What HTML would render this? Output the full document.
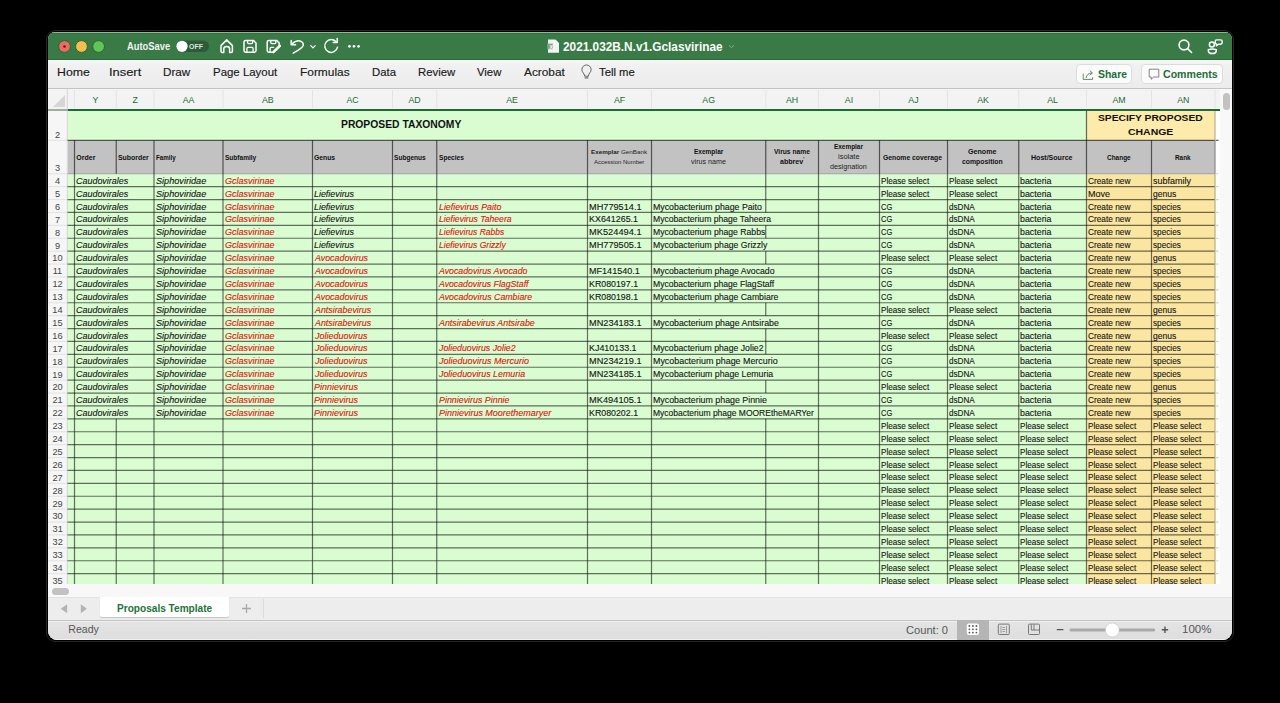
<!DOCTYPE html><html><head><meta charset="utf-8"><style>
html,body{margin:0;padding:0;width:1280px;height:703px;overflow:hidden;background:#000;}
body{position:relative;font-family:"Liberation Sans",sans-serif;}
.t{position:absolute;white-space:nowrap;line-height:0;}
.t>span{display:inline-block;vertical-align:baseline;}
svg{position:absolute;left:0;top:0;}
</style></head><body>
<div style="position:absolute;left:46px;top:30px;width:1186px;height:610px;border-radius:9px;border:1px solid #262626;background:#000;"></div>
<div id="win" style="position:absolute;left:48px;top:32px;width:1184px;height:608px;border-radius:7px 7px 9px 9px;overflow:hidden;background:#f0f0f0;">
<div style="position:absolute;left:-48px;top:-32px;width:1280px;height:703px;">
<div style="position:absolute;left:48.00px;top:32.00px;width:1184.00px;height:27.70px;background:#3a7a47;"></div>
<div style="position:absolute;left:48.00px;top:58.70px;width:1184.00px;height:1.00px;background:#2b6c38;"></div>
<div style="position:absolute;left:48.00px;top:32.00px;width:1184.00px;height:1.00px;background:#8fb897;"></div>
<div style="position:absolute;left:48.00px;top:33.00px;width:1184.00px;height:1.00px;background:#2f7238;"></div>
<div style="position:absolute;left:48.00px;top:59.70px;width:1184.00px;height:28.80px;background:linear-gradient(#f7f7f7,#f1f1f1 20%,#ececec);"></div>
<div style="position:absolute;left:48.00px;top:88.00px;width:1184.00px;height:1.20px;background:#c4c4c4;"></div>
<div style="position:absolute;left:48.00px;top:89.20px;width:1184.00px;height:19.60px;background:#f3f3f3;"></div>
<div style="position:absolute;left:67.50px;top:110.60px;width:1152.10px;height:473.80px;background:#ffffff;"></div>
<div style="position:absolute;left:48.00px;top:110.60px;width:19.50px;height:473.80px;background:#f6f6f6;"></div>
<div style="position:absolute;left:67.50px;top:110.60px;width:1019.00px;height:29.70px;background:#d9fcd1;"></div>
<div style="position:absolute;left:1086.50px;top:110.60px;width:128.50px;height:29.70px;background:#fcebab;"></div>
<div style="position:absolute;left:67.50px;top:140.30px;width:1147.50px;height:33.45px;background:#c2c2c2;"></div>
<div style="position:absolute;left:67.50px;top:173.75px;width:1019.00px;height:410.65px;background:#d9fcd1;"></div>
<div style="position:absolute;left:1086.50px;top:173.75px;width:128.50px;height:410.65px;background:#fbe6a1;"></div>
<div style="position:absolute;left:48.00px;top:109.40px;width:19.50px;height:1.20px;background:#9fae9f;z-index:2;"></div>
<div style="position:absolute;left:67.50px;top:108.80px;width:1152.10px;height:1.90px;background:#1e6b37;z-index:2;"></div>
<svg width="1280" height="703" style="z-index:1"><line x1="48" y1="140.3" x2="67.5" y2="140.3" stroke="#e2e2e2" stroke-width="1"/><line x1="48" y1="173.75" x2="67.5" y2="173.75" stroke="#e2e2e2" stroke-width="1"/><line x1="48" y1="186.65" x2="67.5" y2="186.65" stroke="#e2e2e2" stroke-width="1"/><line x1="48" y1="199.55" x2="67.5" y2="199.55" stroke="#e2e2e2" stroke-width="1"/><line x1="48" y1="212.45" x2="67.5" y2="212.45" stroke="#e2e2e2" stroke-width="1"/><line x1="48" y1="225.35" x2="67.5" y2="225.35" stroke="#e2e2e2" stroke-width="1"/><line x1="48" y1="238.25" x2="67.5" y2="238.25" stroke="#e2e2e2" stroke-width="1"/><line x1="48" y1="251.15" x2="67.5" y2="251.15" stroke="#e2e2e2" stroke-width="1"/><line x1="48" y1="264.05" x2="67.5" y2="264.05" stroke="#e2e2e2" stroke-width="1"/><line x1="48" y1="276.95" x2="67.5" y2="276.95" stroke="#e2e2e2" stroke-width="1"/><line x1="48" y1="289.85" x2="67.5" y2="289.85" stroke="#e2e2e2" stroke-width="1"/><line x1="48" y1="302.75" x2="67.5" y2="302.75" stroke="#e2e2e2" stroke-width="1"/><line x1="48" y1="315.65" x2="67.5" y2="315.65" stroke="#e2e2e2" stroke-width="1"/><line x1="48" y1="328.55" x2="67.5" y2="328.55" stroke="#e2e2e2" stroke-width="1"/><line x1="48" y1="341.45000000000005" x2="67.5" y2="341.45000000000005" stroke="#e2e2e2" stroke-width="1"/><line x1="48" y1="354.35" x2="67.5" y2="354.35" stroke="#e2e2e2" stroke-width="1"/><line x1="48" y1="367.25" x2="67.5" y2="367.25" stroke="#e2e2e2" stroke-width="1"/><line x1="48" y1="380.15" x2="67.5" y2="380.15" stroke="#e2e2e2" stroke-width="1"/><line x1="48" y1="393.05" x2="67.5" y2="393.05" stroke="#e2e2e2" stroke-width="1"/><line x1="48" y1="405.95000000000005" x2="67.5" y2="405.95000000000005" stroke="#e2e2e2" stroke-width="1"/><line x1="48" y1="418.85" x2="67.5" y2="418.85" stroke="#e2e2e2" stroke-width="1"/><line x1="48" y1="431.75" x2="67.5" y2="431.75" stroke="#e2e2e2" stroke-width="1"/><line x1="48" y1="444.65000000000003" x2="67.5" y2="444.65000000000003" stroke="#e2e2e2" stroke-width="1"/><line x1="48" y1="457.55" x2="67.5" y2="457.55" stroke="#e2e2e2" stroke-width="1"/><line x1="48" y1="470.45" x2="67.5" y2="470.45" stroke="#e2e2e2" stroke-width="1"/><line x1="48" y1="483.35" x2="67.5" y2="483.35" stroke="#e2e2e2" stroke-width="1"/><line x1="48" y1="496.25" x2="67.5" y2="496.25" stroke="#e2e2e2" stroke-width="1"/><line x1="48" y1="509.15000000000003" x2="67.5" y2="509.15000000000003" stroke="#e2e2e2" stroke-width="1"/><line x1="48" y1="522.05" x2="67.5" y2="522.05" stroke="#e2e2e2" stroke-width="1"/><line x1="48" y1="534.95" x2="67.5" y2="534.95" stroke="#e2e2e2" stroke-width="1"/><line x1="48" y1="547.85" x2="67.5" y2="547.85" stroke="#e2e2e2" stroke-width="1"/><line x1="48" y1="560.75" x2="67.5" y2="560.75" stroke="#e2e2e2" stroke-width="1"/><line x1="48" y1="573.6500000000001" x2="67.5" y2="573.6500000000001" stroke="#e2e2e2" stroke-width="1"/><line x1="67.3" y1="89" x2="67.3" y2="584.4" stroke="#d4d4d4" stroke-width="1"/><line x1="74.5" y1="90" x2="74.5" y2="108" stroke="#e4e4e4" stroke-width="1"/><line x1="116.25" y1="90" x2="116.25" y2="108" stroke="#e4e4e4" stroke-width="1"/><line x1="154" y1="90" x2="154" y2="108" stroke="#e4e4e4" stroke-width="1"/><line x1="223" y1="90" x2="223" y2="108" stroke="#e4e4e4" stroke-width="1"/><line x1="312.5" y1="90" x2="312.5" y2="108" stroke="#e4e4e4" stroke-width="1"/><line x1="392.5" y1="90" x2="392.5" y2="108" stroke="#e4e4e4" stroke-width="1"/><line x1="436.75" y1="90" x2="436.75" y2="108" stroke="#e4e4e4" stroke-width="1"/><line x1="587.5" y1="90" x2="587.5" y2="108" stroke="#e4e4e4" stroke-width="1"/><line x1="651.5" y1="90" x2="651.5" y2="108" stroke="#e4e4e4" stroke-width="1"/><line x1="765.75" y1="90" x2="765.75" y2="108" stroke="#e4e4e4" stroke-width="1"/><line x1="818.5" y1="90" x2="818.5" y2="108" stroke="#e4e4e4" stroke-width="1"/><line x1="879.5" y1="90" x2="879.5" y2="108" stroke="#e4e4e4" stroke-width="1"/><line x1="947.5" y1="90" x2="947.5" y2="108" stroke="#e4e4e4" stroke-width="1"/><line x1="1018.75" y1="90" x2="1018.75" y2="108" stroke="#e4e4e4" stroke-width="1"/><line x1="1086.5" y1="90" x2="1086.5" y2="108" stroke="#e4e4e4" stroke-width="1"/><line x1="1151.5" y1="90" x2="1151.5" y2="108" stroke="#e4e4e4" stroke-width="1"/><line x1="1215" y1="90" x2="1215" y2="108" stroke="#e4e4e4" stroke-width="1"/><line x1="67.5" y1="140.3" x2="1215" y2="140.3" stroke="rgba(0,0,0,0.58)" stroke-width="1.2"/><line x1="1215.5" y1="140.3" x2="1218.6" y2="140.3" stroke="#6a6a6a" stroke-width="1.2"/><line x1="67.5" y1="173.75" x2="1215" y2="173.75" stroke="#a9a4aa" stroke-width="1.2"/><line x1="1215.5" y1="173.75" x2="1218.6" y2="173.75" stroke="#cfcfcf" stroke-width="1.2"/><line x1="67.5" y1="186.65" x2="1215" y2="186.65" stroke="rgba(0,0,0,0.56)" stroke-width="1.2"/><line x1="1215.5" y1="186.65" x2="1218.6" y2="186.65" stroke="#cfcfcf" stroke-width="1.2"/><line x1="67.5" y1="199.55" x2="1215" y2="199.55" stroke="rgba(0,0,0,0.56)" stroke-width="1.2"/><line x1="1215.5" y1="199.55" x2="1218.6" y2="199.55" stroke="#cfcfcf" stroke-width="1.2"/><line x1="67.5" y1="212.45" x2="1215" y2="212.45" stroke="rgba(0,0,0,0.56)" stroke-width="1.2"/><line x1="1215.5" y1="212.45" x2="1218.6" y2="212.45" stroke="#cfcfcf" stroke-width="1.2"/><line x1="67.5" y1="225.35" x2="1215" y2="225.35" stroke="rgba(0,0,0,0.56)" stroke-width="1.2"/><line x1="1215.5" y1="225.35" x2="1218.6" y2="225.35" stroke="#cfcfcf" stroke-width="1.2"/><line x1="67.5" y1="238.25" x2="1215" y2="238.25" stroke="rgba(0,0,0,0.56)" stroke-width="1.2"/><line x1="1215.5" y1="238.25" x2="1218.6" y2="238.25" stroke="#cfcfcf" stroke-width="1.2"/><line x1="67.5" y1="251.15" x2="1215" y2="251.15" stroke="rgba(0,0,0,0.56)" stroke-width="1.2"/><line x1="1215.5" y1="251.15" x2="1218.6" y2="251.15" stroke="#cfcfcf" stroke-width="1.2"/><line x1="67.5" y1="264.05" x2="1215" y2="264.05" stroke="rgba(0,0,0,0.56)" stroke-width="1.2"/><line x1="1215.5" y1="264.05" x2="1218.6" y2="264.05" stroke="#cfcfcf" stroke-width="1.2"/><line x1="67.5" y1="276.95" x2="1215" y2="276.95" stroke="rgba(0,0,0,0.56)" stroke-width="1.2"/><line x1="1215.5" y1="276.95" x2="1218.6" y2="276.95" stroke="#cfcfcf" stroke-width="1.2"/><line x1="67.5" y1="289.85" x2="1215" y2="289.85" stroke="rgba(0,0,0,0.56)" stroke-width="1.2"/><line x1="1215.5" y1="289.85" x2="1218.6" y2="289.85" stroke="#cfcfcf" stroke-width="1.2"/><line x1="67.5" y1="302.75" x2="1215" y2="302.75" stroke="rgba(0,0,0,0.56)" stroke-width="1.2"/><line x1="1215.5" y1="302.75" x2="1218.6" y2="302.75" stroke="#cfcfcf" stroke-width="1.2"/><line x1="67.5" y1="315.65" x2="1215" y2="315.65" stroke="rgba(0,0,0,0.56)" stroke-width="1.2"/><line x1="1215.5" y1="315.65" x2="1218.6" y2="315.65" stroke="#cfcfcf" stroke-width="1.2"/><line x1="67.5" y1="328.55" x2="1215" y2="328.55" stroke="rgba(0,0,0,0.56)" stroke-width="1.2"/><line x1="1215.5" y1="328.55" x2="1218.6" y2="328.55" stroke="#cfcfcf" stroke-width="1.2"/><line x1="67.5" y1="341.45000000000005" x2="1215" y2="341.45000000000005" stroke="rgba(0,0,0,0.56)" stroke-width="1.2"/><line x1="1215.5" y1="341.45000000000005" x2="1218.6" y2="341.45000000000005" stroke="#cfcfcf" stroke-width="1.2"/><line x1="67.5" y1="354.35" x2="1215" y2="354.35" stroke="rgba(0,0,0,0.56)" stroke-width="1.2"/><line x1="1215.5" y1="354.35" x2="1218.6" y2="354.35" stroke="#cfcfcf" stroke-width="1.2"/><line x1="67.5" y1="367.25" x2="1215" y2="367.25" stroke="rgba(0,0,0,0.56)" stroke-width="1.2"/><line x1="1215.5" y1="367.25" x2="1218.6" y2="367.25" stroke="#cfcfcf" stroke-width="1.2"/><line x1="67.5" y1="380.15" x2="1215" y2="380.15" stroke="rgba(0,0,0,0.56)" stroke-width="1.2"/><line x1="1215.5" y1="380.15" x2="1218.6" y2="380.15" stroke="#cfcfcf" stroke-width="1.2"/><line x1="67.5" y1="393.05" x2="1215" y2="393.05" stroke="rgba(0,0,0,0.56)" stroke-width="1.2"/><line x1="1215.5" y1="393.05" x2="1218.6" y2="393.05" stroke="#cfcfcf" stroke-width="1.2"/><line x1="67.5" y1="405.95000000000005" x2="1215" y2="405.95000000000005" stroke="rgba(0,0,0,0.56)" stroke-width="1.2"/><line x1="1215.5" y1="405.95000000000005" x2="1218.6" y2="405.95000000000005" stroke="#cfcfcf" stroke-width="1.2"/><line x1="67.5" y1="418.85" x2="1215" y2="418.85" stroke="rgba(0,0,0,0.56)" stroke-width="1.2"/><line x1="1215.5" y1="418.85" x2="1218.6" y2="418.85" stroke="#cfcfcf" stroke-width="1.2"/><line x1="67.5" y1="431.75" x2="1215" y2="431.75" stroke="rgba(0,0,0,0.56)" stroke-width="1.2"/><line x1="1215.5" y1="431.75" x2="1218.6" y2="431.75" stroke="#cfcfcf" stroke-width="1.2"/><line x1="67.5" y1="444.65000000000003" x2="1215" y2="444.65000000000003" stroke="rgba(0,0,0,0.56)" stroke-width="1.2"/><line x1="1215.5" y1="444.65000000000003" x2="1218.6" y2="444.65000000000003" stroke="#cfcfcf" stroke-width="1.2"/><line x1="67.5" y1="457.55" x2="1215" y2="457.55" stroke="rgba(0,0,0,0.56)" stroke-width="1.2"/><line x1="1215.5" y1="457.55" x2="1218.6" y2="457.55" stroke="#cfcfcf" stroke-width="1.2"/><line x1="67.5" y1="470.45" x2="1215" y2="470.45" stroke="rgba(0,0,0,0.56)" stroke-width="1.2"/><line x1="1215.5" y1="470.45" x2="1218.6" y2="470.45" stroke="#cfcfcf" stroke-width="1.2"/><line x1="67.5" y1="483.35" x2="1215" y2="483.35" stroke="rgba(0,0,0,0.56)" stroke-width="1.2"/><line x1="1215.5" y1="483.35" x2="1218.6" y2="483.35" stroke="#cfcfcf" stroke-width="1.2"/><line x1="67.5" y1="496.25" x2="1215" y2="496.25" stroke="rgba(0,0,0,0.56)" stroke-width="1.2"/><line x1="1215.5" y1="496.25" x2="1218.6" y2="496.25" stroke="#cfcfcf" stroke-width="1.2"/><line x1="67.5" y1="509.15000000000003" x2="1215" y2="509.15000000000003" stroke="rgba(0,0,0,0.56)" stroke-width="1.2"/><line x1="1215.5" y1="509.15000000000003" x2="1218.6" y2="509.15000000000003" stroke="#cfcfcf" stroke-width="1.2"/><line x1="67.5" y1="522.05" x2="1215" y2="522.05" stroke="rgba(0,0,0,0.56)" stroke-width="1.2"/><line x1="1215.5" y1="522.05" x2="1218.6" y2="522.05" stroke="#cfcfcf" stroke-width="1.2"/><line x1="67.5" y1="534.95" x2="1215" y2="534.95" stroke="rgba(0,0,0,0.56)" stroke-width="1.2"/><line x1="1215.5" y1="534.95" x2="1218.6" y2="534.95" stroke="#cfcfcf" stroke-width="1.2"/><line x1="67.5" y1="547.85" x2="1215" y2="547.85" stroke="rgba(0,0,0,0.56)" stroke-width="1.2"/><line x1="1215.5" y1="547.85" x2="1218.6" y2="547.85" stroke="#cfcfcf" stroke-width="1.2"/><line x1="67.5" y1="560.75" x2="1215" y2="560.75" stroke="rgba(0,0,0,0.56)" stroke-width="1.2"/><line x1="1215.5" y1="560.75" x2="1218.6" y2="560.75" stroke="#cfcfcf" stroke-width="1.2"/><line x1="67.5" y1="573.6500000000001" x2="1215" y2="573.6500000000001" stroke="rgba(0,0,0,0.56)" stroke-width="1.2"/><line x1="1215.5" y1="573.6500000000001" x2="1218.6" y2="573.6500000000001" stroke="#cfcfcf" stroke-width="1.2"/><line x1="1086.5" y1="110.6" x2="1086.5" y2="140.3" stroke="rgba(0,0,0,0.58)" stroke-width="1.2"/><line x1="1215" y1="110.6" x2="1215" y2="140.3" stroke="#bdb38c" stroke-width="1.2"/><line x1="74.5" y1="140.3" x2="74.5" y2="173.75" stroke="rgba(0,0,0,0.58)" stroke-width="1.2"/><line x1="116.25" y1="140.3" x2="116.25" y2="173.75" stroke="rgba(0,0,0,0.58)" stroke-width="1.2"/><line x1="154" y1="140.3" x2="154" y2="173.75" stroke="rgba(0,0,0,0.58)" stroke-width="1.2"/><line x1="223" y1="140.3" x2="223" y2="173.75" stroke="rgba(0,0,0,0.58)" stroke-width="1.2"/><line x1="312.5" y1="140.3" x2="312.5" y2="173.75" stroke="rgba(0,0,0,0.58)" stroke-width="1.2"/><line x1="392.5" y1="140.3" x2="392.5" y2="173.75" stroke="rgba(0,0,0,0.58)" stroke-width="1.2"/><line x1="436.75" y1="140.3" x2="436.75" y2="173.75" stroke="rgba(0,0,0,0.58)" stroke-width="1.2"/><line x1="587.5" y1="140.3" x2="587.5" y2="173.75" stroke="rgba(0,0,0,0.58)" stroke-width="1.2"/><line x1="651.5" y1="140.3" x2="651.5" y2="173.75" stroke="rgba(0,0,0,0.58)" stroke-width="1.2"/><line x1="765.75" y1="140.3" x2="765.75" y2="173.75" stroke="rgba(0,0,0,0.58)" stroke-width="1.2"/><line x1="818.5" y1="140.3" x2="818.5" y2="173.75" stroke="rgba(0,0,0,0.58)" stroke-width="1.2"/><line x1="879.5" y1="140.3" x2="879.5" y2="173.75" stroke="rgba(0,0,0,0.58)" stroke-width="1.2"/><line x1="947.5" y1="140.3" x2="947.5" y2="173.75" stroke="rgba(0,0,0,0.58)" stroke-width="1.2"/><line x1="1018.75" y1="140.3" x2="1018.75" y2="173.75" stroke="rgba(0,0,0,0.58)" stroke-width="1.2"/><line x1="1086.5" y1="140.3" x2="1086.5" y2="173.75" stroke="rgba(0,0,0,0.58)" stroke-width="1.2"/><line x1="1151.5" y1="140.3" x2="1151.5" y2="173.75" stroke="rgba(0,0,0,0.58)" stroke-width="1.2"/><line x1="1215" y1="140.3" x2="1215" y2="173.75" stroke="#8a8a8a" stroke-width="1.2"/><line x1="74.5" y1="173.75" x2="74.5" y2="186.65" stroke="rgba(0,0,0,0.56)" stroke-width="1.2"/><line x1="74.5" y1="186.65" x2="74.5" y2="199.55" stroke="rgba(0,0,0,0.56)" stroke-width="1.2"/><line x1="74.5" y1="199.55" x2="74.5" y2="212.45" stroke="rgba(0,0,0,0.56)" stroke-width="1.2"/><line x1="74.5" y1="212.45" x2="74.5" y2="225.35" stroke="rgba(0,0,0,0.56)" stroke-width="1.2"/><line x1="74.5" y1="225.35" x2="74.5" y2="238.25" stroke="rgba(0,0,0,0.56)" stroke-width="1.2"/><line x1="74.5" y1="238.25" x2="74.5" y2="251.15" stroke="rgba(0,0,0,0.56)" stroke-width="1.2"/><line x1="74.5" y1="251.15" x2="74.5" y2="264.05" stroke="rgba(0,0,0,0.56)" stroke-width="1.2"/><line x1="74.5" y1="264.05" x2="74.5" y2="276.95" stroke="rgba(0,0,0,0.56)" stroke-width="1.2"/><line x1="74.5" y1="276.95" x2="74.5" y2="289.85" stroke="rgba(0,0,0,0.56)" stroke-width="1.2"/><line x1="74.5" y1="289.85" x2="74.5" y2="302.75" stroke="rgba(0,0,0,0.56)" stroke-width="1.2"/><line x1="74.5" y1="302.75" x2="74.5" y2="315.65" stroke="rgba(0,0,0,0.56)" stroke-width="1.2"/><line x1="74.5" y1="315.65" x2="74.5" y2="328.55" stroke="rgba(0,0,0,0.56)" stroke-width="1.2"/><line x1="74.5" y1="328.55" x2="74.5" y2="341.45000000000005" stroke="rgba(0,0,0,0.56)" stroke-width="1.2"/><line x1="74.5" y1="341.45000000000005" x2="74.5" y2="354.35" stroke="rgba(0,0,0,0.56)" stroke-width="1.2"/><line x1="74.5" y1="354.35" x2="74.5" y2="367.25" stroke="rgba(0,0,0,0.56)" stroke-width="1.2"/><line x1="74.5" y1="367.25" x2="74.5" y2="380.15" stroke="rgba(0,0,0,0.56)" stroke-width="1.2"/><line x1="74.5" y1="380.15" x2="74.5" y2="393.05" stroke="rgba(0,0,0,0.56)" stroke-width="1.2"/><line x1="74.5" y1="393.05" x2="74.5" y2="405.95000000000005" stroke="rgba(0,0,0,0.56)" stroke-width="1.2"/><line x1="74.5" y1="405.95000000000005" x2="74.5" y2="418.85" stroke="rgba(0,0,0,0.56)" stroke-width="1.2"/><line x1="74.5" y1="418.85" x2="74.5" y2="431.75" stroke="rgba(0,0,0,0.56)" stroke-width="1.2"/><line x1="74.5" y1="431.75" x2="74.5" y2="444.65000000000003" stroke="rgba(0,0,0,0.56)" stroke-width="1.2"/><line x1="74.5" y1="444.65000000000003" x2="74.5" y2="457.55" stroke="rgba(0,0,0,0.56)" stroke-width="1.2"/><line x1="74.5" y1="457.55" x2="74.5" y2="470.45" stroke="rgba(0,0,0,0.56)" stroke-width="1.2"/><line x1="74.5" y1="470.45" x2="74.5" y2="483.35" stroke="rgba(0,0,0,0.56)" stroke-width="1.2"/><line x1="74.5" y1="483.35" x2="74.5" y2="496.25" stroke="rgba(0,0,0,0.56)" stroke-width="1.2"/><line x1="74.5" y1="496.25" x2="74.5" y2="509.15000000000003" stroke="rgba(0,0,0,0.56)" stroke-width="1.2"/><line x1="74.5" y1="509.15000000000003" x2="74.5" y2="522.05" stroke="rgba(0,0,0,0.56)" stroke-width="1.2"/><line x1="74.5" y1="522.05" x2="74.5" y2="534.95" stroke="rgba(0,0,0,0.56)" stroke-width="1.2"/><line x1="74.5" y1="534.95" x2="74.5" y2="547.85" stroke="rgba(0,0,0,0.56)" stroke-width="1.2"/><line x1="74.5" y1="547.85" x2="74.5" y2="560.75" stroke="rgba(0,0,0,0.56)" stroke-width="1.2"/><line x1="74.5" y1="560.75" x2="74.5" y2="573.6500000000001" stroke="rgba(0,0,0,0.56)" stroke-width="1.2"/><line x1="74.5" y1="573.6500000000001" x2="74.5" y2="584.4" stroke="rgba(0,0,0,0.56)" stroke-width="1.2"/><line x1="116.25" y1="418.85" x2="116.25" y2="431.75" stroke="rgba(0,0,0,0.56)" stroke-width="1.2"/><line x1="116.25" y1="431.75" x2="116.25" y2="444.65000000000003" stroke="rgba(0,0,0,0.56)" stroke-width="1.2"/><line x1="116.25" y1="444.65000000000003" x2="116.25" y2="457.55" stroke="rgba(0,0,0,0.56)" stroke-width="1.2"/><line x1="116.25" y1="457.55" x2="116.25" y2="470.45" stroke="rgba(0,0,0,0.56)" stroke-width="1.2"/><line x1="116.25" y1="470.45" x2="116.25" y2="483.35" stroke="rgba(0,0,0,0.56)" stroke-width="1.2"/><line x1="116.25" y1="483.35" x2="116.25" y2="496.25" stroke="rgba(0,0,0,0.56)" stroke-width="1.2"/><line x1="116.25" y1="496.25" x2="116.25" y2="509.15000000000003" stroke="rgba(0,0,0,0.56)" stroke-width="1.2"/><line x1="116.25" y1="509.15000000000003" x2="116.25" y2="522.05" stroke="rgba(0,0,0,0.56)" stroke-width="1.2"/><line x1="116.25" y1="522.05" x2="116.25" y2="534.95" stroke="rgba(0,0,0,0.56)" stroke-width="1.2"/><line x1="116.25" y1="534.95" x2="116.25" y2="547.85" stroke="rgba(0,0,0,0.56)" stroke-width="1.2"/><line x1="116.25" y1="547.85" x2="116.25" y2="560.75" stroke="rgba(0,0,0,0.56)" stroke-width="1.2"/><line x1="116.25" y1="560.75" x2="116.25" y2="573.6500000000001" stroke="rgba(0,0,0,0.56)" stroke-width="1.2"/><line x1="116.25" y1="573.6500000000001" x2="116.25" y2="584.4" stroke="rgba(0,0,0,0.56)" stroke-width="1.2"/><line x1="154" y1="173.75" x2="154" y2="186.65" stroke="rgba(0,0,0,0.56)" stroke-width="1.2"/><line x1="154" y1="186.65" x2="154" y2="199.55" stroke="rgba(0,0,0,0.56)" stroke-width="1.2"/><line x1="154" y1="199.55" x2="154" y2="212.45" stroke="rgba(0,0,0,0.56)" stroke-width="1.2"/><line x1="154" y1="212.45" x2="154" y2="225.35" stroke="rgba(0,0,0,0.56)" stroke-width="1.2"/><line x1="154" y1="225.35" x2="154" y2="238.25" stroke="rgba(0,0,0,0.56)" stroke-width="1.2"/><line x1="154" y1="238.25" x2="154" y2="251.15" stroke="rgba(0,0,0,0.56)" stroke-width="1.2"/><line x1="154" y1="251.15" x2="154" y2="264.05" stroke="rgba(0,0,0,0.56)" stroke-width="1.2"/><line x1="154" y1="264.05" x2="154" y2="276.95" stroke="rgba(0,0,0,0.56)" stroke-width="1.2"/><line x1="154" y1="276.95" x2="154" y2="289.85" stroke="rgba(0,0,0,0.56)" stroke-width="1.2"/><line x1="154" y1="289.85" x2="154" y2="302.75" stroke="rgba(0,0,0,0.56)" stroke-width="1.2"/><line x1="154" y1="302.75" x2="154" y2="315.65" stroke="rgba(0,0,0,0.56)" stroke-width="1.2"/><line x1="154" y1="315.65" x2="154" y2="328.55" stroke="rgba(0,0,0,0.56)" stroke-width="1.2"/><line x1="154" y1="328.55" x2="154" y2="341.45000000000005" stroke="rgba(0,0,0,0.56)" stroke-width="1.2"/><line x1="154" y1="341.45000000000005" x2="154" y2="354.35" stroke="rgba(0,0,0,0.56)" stroke-width="1.2"/><line x1="154" y1="354.35" x2="154" y2="367.25" stroke="rgba(0,0,0,0.56)" stroke-width="1.2"/><line x1="154" y1="367.25" x2="154" y2="380.15" stroke="rgba(0,0,0,0.56)" stroke-width="1.2"/><line x1="154" y1="380.15" x2="154" y2="393.05" stroke="rgba(0,0,0,0.56)" stroke-width="1.2"/><line x1="154" y1="393.05" x2="154" y2="405.95000000000005" stroke="rgba(0,0,0,0.56)" stroke-width="1.2"/><line x1="154" y1="405.95000000000005" x2="154" y2="418.85" stroke="rgba(0,0,0,0.56)" stroke-width="1.2"/><line x1="154" y1="418.85" x2="154" y2="431.75" stroke="rgba(0,0,0,0.56)" stroke-width="1.2"/><line x1="154" y1="431.75" x2="154" y2="444.65000000000003" stroke="rgba(0,0,0,0.56)" stroke-width="1.2"/><line x1="154" y1="444.65000000000003" x2="154" y2="457.55" stroke="rgba(0,0,0,0.56)" stroke-width="1.2"/><line x1="154" y1="457.55" x2="154" y2="470.45" stroke="rgba(0,0,0,0.56)" stroke-width="1.2"/><line x1="154" y1="470.45" x2="154" y2="483.35" stroke="rgba(0,0,0,0.56)" stroke-width="1.2"/><line x1="154" y1="483.35" x2="154" y2="496.25" stroke="rgba(0,0,0,0.56)" stroke-width="1.2"/><line x1="154" y1="496.25" x2="154" y2="509.15000000000003" stroke="rgba(0,0,0,0.56)" stroke-width="1.2"/><line x1="154" y1="509.15000000000003" x2="154" y2="522.05" stroke="rgba(0,0,0,0.56)" stroke-width="1.2"/><line x1="154" y1="522.05" x2="154" y2="534.95" stroke="rgba(0,0,0,0.56)" stroke-width="1.2"/><line x1="154" y1="534.95" x2="154" y2="547.85" stroke="rgba(0,0,0,0.56)" stroke-width="1.2"/><line x1="154" y1="547.85" x2="154" y2="560.75" stroke="rgba(0,0,0,0.56)" stroke-width="1.2"/><line x1="154" y1="560.75" x2="154" y2="573.6500000000001" stroke="rgba(0,0,0,0.56)" stroke-width="1.2"/><line x1="154" y1="573.6500000000001" x2="154" y2="584.4" stroke="rgba(0,0,0,0.56)" stroke-width="1.2"/><line x1="223" y1="173.75" x2="223" y2="186.65" stroke="rgba(0,0,0,0.56)" stroke-width="1.2"/><line x1="223" y1="186.65" x2="223" y2="199.55" stroke="rgba(0,0,0,0.56)" stroke-width="1.2"/><line x1="223" y1="199.55" x2="223" y2="212.45" stroke="rgba(0,0,0,0.56)" stroke-width="1.2"/><line x1="223" y1="212.45" x2="223" y2="225.35" stroke="rgba(0,0,0,0.56)" stroke-width="1.2"/><line x1="223" y1="225.35" x2="223" y2="238.25" stroke="rgba(0,0,0,0.56)" stroke-width="1.2"/><line x1="223" y1="238.25" x2="223" y2="251.15" stroke="rgba(0,0,0,0.56)" stroke-width="1.2"/><line x1="223" y1="251.15" x2="223" y2="264.05" stroke="rgba(0,0,0,0.56)" stroke-width="1.2"/><line x1="223" y1="264.05" x2="223" y2="276.95" stroke="rgba(0,0,0,0.56)" stroke-width="1.2"/><line x1="223" y1="276.95" x2="223" y2="289.85" stroke="rgba(0,0,0,0.56)" stroke-width="1.2"/><line x1="223" y1="289.85" x2="223" y2="302.75" stroke="rgba(0,0,0,0.56)" stroke-width="1.2"/><line x1="223" y1="302.75" x2="223" y2="315.65" stroke="rgba(0,0,0,0.56)" stroke-width="1.2"/><line x1="223" y1="315.65" x2="223" y2="328.55" stroke="rgba(0,0,0,0.56)" stroke-width="1.2"/><line x1="223" y1="328.55" x2="223" y2="341.45000000000005" stroke="rgba(0,0,0,0.56)" stroke-width="1.2"/><line x1="223" y1="341.45000000000005" x2="223" y2="354.35" stroke="rgba(0,0,0,0.56)" stroke-width="1.2"/><line x1="223" y1="354.35" x2="223" y2="367.25" stroke="rgba(0,0,0,0.56)" stroke-width="1.2"/><line x1="223" y1="367.25" x2="223" y2="380.15" stroke="rgba(0,0,0,0.56)" stroke-width="1.2"/><line x1="223" y1="380.15" x2="223" y2="393.05" stroke="rgba(0,0,0,0.56)" stroke-width="1.2"/><line x1="223" y1="393.05" x2="223" y2="405.95000000000005" stroke="rgba(0,0,0,0.56)" stroke-width="1.2"/><line x1="223" y1="405.95000000000005" x2="223" y2="418.85" stroke="rgba(0,0,0,0.56)" stroke-width="1.2"/><line x1="223" y1="418.85" x2="223" y2="431.75" stroke="rgba(0,0,0,0.56)" stroke-width="1.2"/><line x1="223" y1="431.75" x2="223" y2="444.65000000000003" stroke="rgba(0,0,0,0.56)" stroke-width="1.2"/><line x1="223" y1="444.65000000000003" x2="223" y2="457.55" stroke="rgba(0,0,0,0.56)" stroke-width="1.2"/><line x1="223" y1="457.55" x2="223" y2="470.45" stroke="rgba(0,0,0,0.56)" stroke-width="1.2"/><line x1="223" y1="470.45" x2="223" y2="483.35" stroke="rgba(0,0,0,0.56)" stroke-width="1.2"/><line x1="223" y1="483.35" x2="223" y2="496.25" stroke="rgba(0,0,0,0.56)" stroke-width="1.2"/><line x1="223" y1="496.25" x2="223" y2="509.15000000000003" stroke="rgba(0,0,0,0.56)" stroke-width="1.2"/><line x1="223" y1="509.15000000000003" x2="223" y2="522.05" stroke="rgba(0,0,0,0.56)" stroke-width="1.2"/><line x1="223" y1="522.05" x2="223" y2="534.95" stroke="rgba(0,0,0,0.56)" stroke-width="1.2"/><line x1="223" y1="534.95" x2="223" y2="547.85" stroke="rgba(0,0,0,0.56)" stroke-width="1.2"/><line x1="223" y1="547.85" x2="223" y2="560.75" stroke="rgba(0,0,0,0.56)" stroke-width="1.2"/><line x1="223" y1="560.75" x2="223" y2="573.6500000000001" stroke="rgba(0,0,0,0.56)" stroke-width="1.2"/><line x1="223" y1="573.6500000000001" x2="223" y2="584.4" stroke="rgba(0,0,0,0.56)" stroke-width="1.2"/><line x1="312.5" y1="173.75" x2="312.5" y2="186.65" stroke="rgba(0,0,0,0.56)" stroke-width="1.2"/><line x1="312.5" y1="186.65" x2="312.5" y2="199.55" stroke="rgba(0,0,0,0.56)" stroke-width="1.2"/><line x1="312.5" y1="199.55" x2="312.5" y2="212.45" stroke="rgba(0,0,0,0.56)" stroke-width="1.2"/><line x1="312.5" y1="212.45" x2="312.5" y2="225.35" stroke="rgba(0,0,0,0.56)" stroke-width="1.2"/><line x1="312.5" y1="225.35" x2="312.5" y2="238.25" stroke="rgba(0,0,0,0.56)" stroke-width="1.2"/><line x1="312.5" y1="238.25" x2="312.5" y2="251.15" stroke="rgba(0,0,0,0.56)" stroke-width="1.2"/><line x1="312.5" y1="251.15" x2="312.5" y2="264.05" stroke="rgba(0,0,0,0.56)" stroke-width="1.2"/><line x1="312.5" y1="264.05" x2="312.5" y2="276.95" stroke="rgba(0,0,0,0.56)" stroke-width="1.2"/><line x1="312.5" y1="276.95" x2="312.5" y2="289.85" stroke="rgba(0,0,0,0.56)" stroke-width="1.2"/><line x1="312.5" y1="289.85" x2="312.5" y2="302.75" stroke="rgba(0,0,0,0.56)" stroke-width="1.2"/><line x1="312.5" y1="302.75" x2="312.5" y2="315.65" stroke="rgba(0,0,0,0.56)" stroke-width="1.2"/><line x1="312.5" y1="315.65" x2="312.5" y2="328.55" stroke="rgba(0,0,0,0.56)" stroke-width="1.2"/><line x1="312.5" y1="328.55" x2="312.5" y2="341.45000000000005" stroke="rgba(0,0,0,0.56)" stroke-width="1.2"/><line x1="312.5" y1="341.45000000000005" x2="312.5" y2="354.35" stroke="rgba(0,0,0,0.56)" stroke-width="1.2"/><line x1="312.5" y1="354.35" x2="312.5" y2="367.25" stroke="rgba(0,0,0,0.56)" stroke-width="1.2"/><line x1="312.5" y1="367.25" x2="312.5" y2="380.15" stroke="rgba(0,0,0,0.56)" stroke-width="1.2"/><line x1="312.5" y1="380.15" x2="312.5" y2="393.05" stroke="rgba(0,0,0,0.56)" stroke-width="1.2"/><line x1="312.5" y1="393.05" x2="312.5" y2="405.95000000000005" stroke="rgba(0,0,0,0.56)" stroke-width="1.2"/><line x1="312.5" y1="405.95000000000005" x2="312.5" y2="418.85" stroke="rgba(0,0,0,0.56)" stroke-width="1.2"/><line x1="312.5" y1="418.85" x2="312.5" y2="431.75" stroke="rgba(0,0,0,0.56)" stroke-width="1.2"/><line x1="312.5" y1="431.75" x2="312.5" y2="444.65000000000003" stroke="rgba(0,0,0,0.56)" stroke-width="1.2"/><line x1="312.5" y1="444.65000000000003" x2="312.5" y2="457.55" stroke="rgba(0,0,0,0.56)" stroke-width="1.2"/><line x1="312.5" y1="457.55" x2="312.5" y2="470.45" stroke="rgba(0,0,0,0.56)" stroke-width="1.2"/><line x1="312.5" y1="470.45" x2="312.5" y2="483.35" stroke="rgba(0,0,0,0.56)" stroke-width="1.2"/><line x1="312.5" y1="483.35" x2="312.5" y2="496.25" stroke="rgba(0,0,0,0.56)" stroke-width="1.2"/><line x1="312.5" y1="496.25" x2="312.5" y2="509.15000000000003" stroke="rgba(0,0,0,0.56)" stroke-width="1.2"/><line x1="312.5" y1="509.15000000000003" x2="312.5" y2="522.05" stroke="rgba(0,0,0,0.56)" stroke-width="1.2"/><line x1="312.5" y1="522.05" x2="312.5" y2="534.95" stroke="rgba(0,0,0,0.56)" stroke-width="1.2"/><line x1="312.5" y1="534.95" x2="312.5" y2="547.85" stroke="rgba(0,0,0,0.56)" stroke-width="1.2"/><line x1="312.5" y1="547.85" x2="312.5" y2="560.75" stroke="rgba(0,0,0,0.56)" stroke-width="1.2"/><line x1="312.5" y1="560.75" x2="312.5" y2="573.6500000000001" stroke="rgba(0,0,0,0.56)" stroke-width="1.2"/><line x1="312.5" y1="573.6500000000001" x2="312.5" y2="584.4" stroke="rgba(0,0,0,0.56)" stroke-width="1.2"/><line x1="392.5" y1="173.75" x2="392.5" y2="186.65" stroke="rgba(0,0,0,0.56)" stroke-width="1.2"/><line x1="392.5" y1="186.65" x2="392.5" y2="199.55" stroke="rgba(0,0,0,0.56)" stroke-width="1.2"/><line x1="392.5" y1="199.55" x2="392.5" y2="212.45" stroke="rgba(0,0,0,0.56)" stroke-width="1.2"/><line x1="392.5" y1="212.45" x2="392.5" y2="225.35" stroke="rgba(0,0,0,0.56)" stroke-width="1.2"/><line x1="392.5" y1="225.35" x2="392.5" y2="238.25" stroke="rgba(0,0,0,0.56)" stroke-width="1.2"/><line x1="392.5" y1="238.25" x2="392.5" y2="251.15" stroke="rgba(0,0,0,0.56)" stroke-width="1.2"/><line x1="392.5" y1="251.15" x2="392.5" y2="264.05" stroke="rgba(0,0,0,0.56)" stroke-width="1.2"/><line x1="392.5" y1="264.05" x2="392.5" y2="276.95" stroke="rgba(0,0,0,0.56)" stroke-width="1.2"/><line x1="392.5" y1="276.95" x2="392.5" y2="289.85" stroke="rgba(0,0,0,0.56)" stroke-width="1.2"/><line x1="392.5" y1="289.85" x2="392.5" y2="302.75" stroke="rgba(0,0,0,0.56)" stroke-width="1.2"/><line x1="392.5" y1="302.75" x2="392.5" y2="315.65" stroke="rgba(0,0,0,0.56)" stroke-width="1.2"/><line x1="392.5" y1="315.65" x2="392.5" y2="328.55" stroke="rgba(0,0,0,0.56)" stroke-width="1.2"/><line x1="392.5" y1="328.55" x2="392.5" y2="341.45000000000005" stroke="rgba(0,0,0,0.56)" stroke-width="1.2"/><line x1="392.5" y1="341.45000000000005" x2="392.5" y2="354.35" stroke="rgba(0,0,0,0.56)" stroke-width="1.2"/><line x1="392.5" y1="354.35" x2="392.5" y2="367.25" stroke="rgba(0,0,0,0.56)" stroke-width="1.2"/><line x1="392.5" y1="367.25" x2="392.5" y2="380.15" stroke="rgba(0,0,0,0.56)" stroke-width="1.2"/><line x1="392.5" y1="380.15" x2="392.5" y2="393.05" stroke="rgba(0,0,0,0.56)" stroke-width="1.2"/><line x1="392.5" y1="393.05" x2="392.5" y2="405.95000000000005" stroke="rgba(0,0,0,0.56)" stroke-width="1.2"/><line x1="392.5" y1="405.95000000000005" x2="392.5" y2="418.85" stroke="rgba(0,0,0,0.56)" stroke-width="1.2"/><line x1="392.5" y1="418.85" x2="392.5" y2="431.75" stroke="rgba(0,0,0,0.56)" stroke-width="1.2"/><line x1="392.5" y1="431.75" x2="392.5" y2="444.65000000000003" stroke="rgba(0,0,0,0.56)" stroke-width="1.2"/><line x1="392.5" y1="444.65000000000003" x2="392.5" y2="457.55" stroke="rgba(0,0,0,0.56)" stroke-width="1.2"/><line x1="392.5" y1="457.55" x2="392.5" y2="470.45" stroke="rgba(0,0,0,0.56)" stroke-width="1.2"/><line x1="392.5" y1="470.45" x2="392.5" y2="483.35" stroke="rgba(0,0,0,0.56)" stroke-width="1.2"/><line x1="392.5" y1="483.35" x2="392.5" y2="496.25" stroke="rgba(0,0,0,0.56)" stroke-width="1.2"/><line x1="392.5" y1="496.25" x2="392.5" y2="509.15000000000003" stroke="rgba(0,0,0,0.56)" stroke-width="1.2"/><line x1="392.5" y1="509.15000000000003" x2="392.5" y2="522.05" stroke="rgba(0,0,0,0.56)" stroke-width="1.2"/><line x1="392.5" y1="522.05" x2="392.5" y2="534.95" stroke="rgba(0,0,0,0.56)" stroke-width="1.2"/><line x1="392.5" y1="534.95" x2="392.5" y2="547.85" stroke="rgba(0,0,0,0.56)" stroke-width="1.2"/><line x1="392.5" y1="547.85" x2="392.5" y2="560.75" stroke="rgba(0,0,0,0.56)" stroke-width="1.2"/><line x1="392.5" y1="560.75" x2="392.5" y2="573.6500000000001" stroke="rgba(0,0,0,0.56)" stroke-width="1.2"/><line x1="392.5" y1="573.6500000000001" x2="392.5" y2="584.4" stroke="rgba(0,0,0,0.56)" stroke-width="1.2"/><line x1="436.75" y1="173.75" x2="436.75" y2="186.65" stroke="rgba(0,0,0,0.56)" stroke-width="1.2"/><line x1="436.75" y1="186.65" x2="436.75" y2="199.55" stroke="rgba(0,0,0,0.56)" stroke-width="1.2"/><line x1="436.75" y1="199.55" x2="436.75" y2="212.45" stroke="rgba(0,0,0,0.56)" stroke-width="1.2"/><line x1="436.75" y1="212.45" x2="436.75" y2="225.35" stroke="rgba(0,0,0,0.56)" stroke-width="1.2"/><line x1="436.75" y1="225.35" x2="436.75" y2="238.25" stroke="rgba(0,0,0,0.56)" stroke-width="1.2"/><line x1="436.75" y1="238.25" x2="436.75" y2="251.15" stroke="rgba(0,0,0,0.56)" stroke-width="1.2"/><line x1="436.75" y1="251.15" x2="436.75" y2="264.05" stroke="rgba(0,0,0,0.56)" stroke-width="1.2"/><line x1="436.75" y1="264.05" x2="436.75" y2="276.95" stroke="rgba(0,0,0,0.56)" stroke-width="1.2"/><line x1="436.75" y1="276.95" x2="436.75" y2="289.85" stroke="rgba(0,0,0,0.56)" stroke-width="1.2"/><line x1="436.75" y1="289.85" x2="436.75" y2="302.75" stroke="rgba(0,0,0,0.56)" stroke-width="1.2"/><line x1="436.75" y1="302.75" x2="436.75" y2="315.65" stroke="rgba(0,0,0,0.56)" stroke-width="1.2"/><line x1="436.75" y1="315.65" x2="436.75" y2="328.55" stroke="rgba(0,0,0,0.56)" stroke-width="1.2"/><line x1="436.75" y1="328.55" x2="436.75" y2="341.45000000000005" stroke="rgba(0,0,0,0.56)" stroke-width="1.2"/><line x1="436.75" y1="341.45000000000005" x2="436.75" y2="354.35" stroke="rgba(0,0,0,0.56)" stroke-width="1.2"/><line x1="436.75" y1="354.35" x2="436.75" y2="367.25" stroke="rgba(0,0,0,0.56)" stroke-width="1.2"/><line x1="436.75" y1="367.25" x2="436.75" y2="380.15" stroke="rgba(0,0,0,0.56)" stroke-width="1.2"/><line x1="436.75" y1="380.15" x2="436.75" y2="393.05" stroke="rgba(0,0,0,0.56)" stroke-width="1.2"/><line x1="436.75" y1="393.05" x2="436.75" y2="405.95000000000005" stroke="rgba(0,0,0,0.56)" stroke-width="1.2"/><line x1="436.75" y1="405.95000000000005" x2="436.75" y2="418.85" stroke="rgba(0,0,0,0.56)" stroke-width="1.2"/><line x1="436.75" y1="418.85" x2="436.75" y2="431.75" stroke="rgba(0,0,0,0.56)" stroke-width="1.2"/><line x1="436.75" y1="431.75" x2="436.75" y2="444.65000000000003" stroke="rgba(0,0,0,0.56)" stroke-width="1.2"/><line x1="436.75" y1="444.65000000000003" x2="436.75" y2="457.55" stroke="rgba(0,0,0,0.56)" stroke-width="1.2"/><line x1="436.75" y1="457.55" x2="436.75" y2="470.45" stroke="rgba(0,0,0,0.56)" stroke-width="1.2"/><line x1="436.75" y1="470.45" x2="436.75" y2="483.35" stroke="rgba(0,0,0,0.56)" stroke-width="1.2"/><line x1="436.75" y1="483.35" x2="436.75" y2="496.25" stroke="rgba(0,0,0,0.56)" stroke-width="1.2"/><line x1="436.75" y1="496.25" x2="436.75" y2="509.15000000000003" stroke="rgba(0,0,0,0.56)" stroke-width="1.2"/><line x1="436.75" y1="509.15000000000003" x2="436.75" y2="522.05" stroke="rgba(0,0,0,0.56)" stroke-width="1.2"/><line x1="436.75" y1="522.05" x2="436.75" y2="534.95" stroke="rgba(0,0,0,0.56)" stroke-width="1.2"/><line x1="436.75" y1="534.95" x2="436.75" y2="547.85" stroke="rgba(0,0,0,0.56)" stroke-width="1.2"/><line x1="436.75" y1="547.85" x2="436.75" y2="560.75" stroke="rgba(0,0,0,0.56)" stroke-width="1.2"/><line x1="436.75" y1="560.75" x2="436.75" y2="573.6500000000001" stroke="rgba(0,0,0,0.56)" stroke-width="1.2"/><line x1="436.75" y1="573.6500000000001" x2="436.75" y2="584.4" stroke="rgba(0,0,0,0.56)" stroke-width="1.2"/><line x1="587.5" y1="173.75" x2="587.5" y2="186.65" stroke="rgba(0,0,0,0.56)" stroke-width="1.2"/><line x1="587.5" y1="186.65" x2="587.5" y2="199.55" stroke="rgba(0,0,0,0.56)" stroke-width="1.2"/><line x1="587.5" y1="199.55" x2="587.5" y2="212.45" stroke="rgba(0,0,0,0.56)" stroke-width="1.2"/><line x1="587.5" y1="212.45" x2="587.5" y2="225.35" stroke="rgba(0,0,0,0.56)" stroke-width="1.2"/><line x1="587.5" y1="225.35" x2="587.5" y2="238.25" stroke="rgba(0,0,0,0.56)" stroke-width="1.2"/><line x1="587.5" y1="238.25" x2="587.5" y2="251.15" stroke="rgba(0,0,0,0.56)" stroke-width="1.2"/><line x1="587.5" y1="251.15" x2="587.5" y2="264.05" stroke="rgba(0,0,0,0.56)" stroke-width="1.2"/><line x1="587.5" y1="264.05" x2="587.5" y2="276.95" stroke="rgba(0,0,0,0.56)" stroke-width="1.2"/><line x1="587.5" y1="276.95" x2="587.5" y2="289.85" stroke="rgba(0,0,0,0.56)" stroke-width="1.2"/><line x1="587.5" y1="289.85" x2="587.5" y2="302.75" stroke="rgba(0,0,0,0.56)" stroke-width="1.2"/><line x1="587.5" y1="302.75" x2="587.5" y2="315.65" stroke="rgba(0,0,0,0.56)" stroke-width="1.2"/><line x1="587.5" y1="315.65" x2="587.5" y2="328.55" stroke="rgba(0,0,0,0.56)" stroke-width="1.2"/><line x1="587.5" y1="328.55" x2="587.5" y2="341.45000000000005" stroke="rgba(0,0,0,0.56)" stroke-width="1.2"/><line x1="587.5" y1="341.45000000000005" x2="587.5" y2="354.35" stroke="rgba(0,0,0,0.56)" stroke-width="1.2"/><line x1="587.5" y1="354.35" x2="587.5" y2="367.25" stroke="rgba(0,0,0,0.56)" stroke-width="1.2"/><line x1="587.5" y1="367.25" x2="587.5" y2="380.15" stroke="rgba(0,0,0,0.56)" stroke-width="1.2"/><line x1="587.5" y1="380.15" x2="587.5" y2="393.05" stroke="rgba(0,0,0,0.56)" stroke-width="1.2"/><line x1="587.5" y1="393.05" x2="587.5" y2="405.95000000000005" stroke="rgba(0,0,0,0.56)" stroke-width="1.2"/><line x1="587.5" y1="405.95000000000005" x2="587.5" y2="418.85" stroke="rgba(0,0,0,0.56)" stroke-width="1.2"/><line x1="587.5" y1="418.85" x2="587.5" y2="431.75" stroke="rgba(0,0,0,0.56)" stroke-width="1.2"/><line x1="587.5" y1="431.75" x2="587.5" y2="444.65000000000003" stroke="rgba(0,0,0,0.56)" stroke-width="1.2"/><line x1="587.5" y1="444.65000000000003" x2="587.5" y2="457.55" stroke="rgba(0,0,0,0.56)" stroke-width="1.2"/><line x1="587.5" y1="457.55" x2="587.5" y2="470.45" stroke="rgba(0,0,0,0.56)" stroke-width="1.2"/><line x1="587.5" y1="470.45" x2="587.5" y2="483.35" stroke="rgba(0,0,0,0.56)" stroke-width="1.2"/><line x1="587.5" y1="483.35" x2="587.5" y2="496.25" stroke="rgba(0,0,0,0.56)" stroke-width="1.2"/><line x1="587.5" y1="496.25" x2="587.5" y2="509.15000000000003" stroke="rgba(0,0,0,0.56)" stroke-width="1.2"/><line x1="587.5" y1="509.15000000000003" x2="587.5" y2="522.05" stroke="rgba(0,0,0,0.56)" stroke-width="1.2"/><line x1="587.5" y1="522.05" x2="587.5" y2="534.95" stroke="rgba(0,0,0,0.56)" stroke-width="1.2"/><line x1="587.5" y1="534.95" x2="587.5" y2="547.85" stroke="rgba(0,0,0,0.56)" stroke-width="1.2"/><line x1="587.5" y1="547.85" x2="587.5" y2="560.75" stroke="rgba(0,0,0,0.56)" stroke-width="1.2"/><line x1="587.5" y1="560.75" x2="587.5" y2="573.6500000000001" stroke="rgba(0,0,0,0.56)" stroke-width="1.2"/><line x1="587.5" y1="573.6500000000001" x2="587.5" y2="584.4" stroke="rgba(0,0,0,0.56)" stroke-width="1.2"/><line x1="651.5" y1="173.75" x2="651.5" y2="186.65" stroke="rgba(0,0,0,0.56)" stroke-width="1.2"/><line x1="651.5" y1="186.65" x2="651.5" y2="199.55" stroke="rgba(0,0,0,0.56)" stroke-width="1.2"/><line x1="651.5" y1="199.55" x2="651.5" y2="212.45" stroke="rgba(0,0,0,0.56)" stroke-width="1.2"/><line x1="651.5" y1="212.45" x2="651.5" y2="225.35" stroke="rgba(0,0,0,0.56)" stroke-width="1.2"/><line x1="651.5" y1="225.35" x2="651.5" y2="238.25" stroke="rgba(0,0,0,0.56)" stroke-width="1.2"/><line x1="651.5" y1="238.25" x2="651.5" y2="251.15" stroke="rgba(0,0,0,0.56)" stroke-width="1.2"/><line x1="651.5" y1="251.15" x2="651.5" y2="264.05" stroke="rgba(0,0,0,0.56)" stroke-width="1.2"/><line x1="651.5" y1="264.05" x2="651.5" y2="276.95" stroke="rgba(0,0,0,0.56)" stroke-width="1.2"/><line x1="651.5" y1="276.95" x2="651.5" y2="289.85" stroke="rgba(0,0,0,0.56)" stroke-width="1.2"/><line x1="651.5" y1="289.85" x2="651.5" y2="302.75" stroke="rgba(0,0,0,0.56)" stroke-width="1.2"/><line x1="651.5" y1="302.75" x2="651.5" y2="315.65" stroke="rgba(0,0,0,0.56)" stroke-width="1.2"/><line x1="651.5" y1="315.65" x2="651.5" y2="328.55" stroke="rgba(0,0,0,0.56)" stroke-width="1.2"/><line x1="651.5" y1="328.55" x2="651.5" y2="341.45000000000005" stroke="rgba(0,0,0,0.56)" stroke-width="1.2"/><line x1="651.5" y1="341.45000000000005" x2="651.5" y2="354.35" stroke="rgba(0,0,0,0.56)" stroke-width="1.2"/><line x1="651.5" y1="354.35" x2="651.5" y2="367.25" stroke="rgba(0,0,0,0.56)" stroke-width="1.2"/><line x1="651.5" y1="367.25" x2="651.5" y2="380.15" stroke="rgba(0,0,0,0.56)" stroke-width="1.2"/><line x1="651.5" y1="380.15" x2="651.5" y2="393.05" stroke="rgba(0,0,0,0.56)" stroke-width="1.2"/><line x1="651.5" y1="393.05" x2="651.5" y2="405.95000000000005" stroke="rgba(0,0,0,0.56)" stroke-width="1.2"/><line x1="651.5" y1="405.95000000000005" x2="651.5" y2="418.85" stroke="rgba(0,0,0,0.56)" stroke-width="1.2"/><line x1="651.5" y1="418.85" x2="651.5" y2="431.75" stroke="rgba(0,0,0,0.56)" stroke-width="1.2"/><line x1="651.5" y1="431.75" x2="651.5" y2="444.65000000000003" stroke="rgba(0,0,0,0.56)" stroke-width="1.2"/><line x1="651.5" y1="444.65000000000003" x2="651.5" y2="457.55" stroke="rgba(0,0,0,0.56)" stroke-width="1.2"/><line x1="651.5" y1="457.55" x2="651.5" y2="470.45" stroke="rgba(0,0,0,0.56)" stroke-width="1.2"/><line x1="651.5" y1="470.45" x2="651.5" y2="483.35" stroke="rgba(0,0,0,0.56)" stroke-width="1.2"/><line x1="651.5" y1="483.35" x2="651.5" y2="496.25" stroke="rgba(0,0,0,0.56)" stroke-width="1.2"/><line x1="651.5" y1="496.25" x2="651.5" y2="509.15000000000003" stroke="rgba(0,0,0,0.56)" stroke-width="1.2"/><line x1="651.5" y1="509.15000000000003" x2="651.5" y2="522.05" stroke="rgba(0,0,0,0.56)" stroke-width="1.2"/><line x1="651.5" y1="522.05" x2="651.5" y2="534.95" stroke="rgba(0,0,0,0.56)" stroke-width="1.2"/><line x1="651.5" y1="534.95" x2="651.5" y2="547.85" stroke="rgba(0,0,0,0.56)" stroke-width="1.2"/><line x1="651.5" y1="547.85" x2="651.5" y2="560.75" stroke="rgba(0,0,0,0.56)" stroke-width="1.2"/><line x1="651.5" y1="560.75" x2="651.5" y2="573.6500000000001" stroke="rgba(0,0,0,0.56)" stroke-width="1.2"/><line x1="651.5" y1="573.6500000000001" x2="651.5" y2="584.4" stroke="rgba(0,0,0,0.56)" stroke-width="1.2"/><line x1="765.75" y1="173.75" x2="765.75" y2="186.65" stroke="rgba(0,0,0,0.56)" stroke-width="1.2"/><line x1="765.75" y1="186.65" x2="765.75" y2="199.55" stroke="rgba(0,0,0,0.56)" stroke-width="1.2"/><line x1="765.75" y1="199.55" x2="765.75" y2="212.45" stroke="rgba(0,0,0,0.56)" stroke-width="1.2"/><line x1="765.75" y1="225.35" x2="765.75" y2="238.25" stroke="rgba(0,0,0,0.56)" stroke-width="1.2"/><line x1="765.75" y1="251.15" x2="765.75" y2="264.05" stroke="rgba(0,0,0,0.56)" stroke-width="1.2"/><line x1="765.75" y1="302.75" x2="765.75" y2="315.65" stroke="rgba(0,0,0,0.56)" stroke-width="1.2"/><line x1="765.75" y1="328.55" x2="765.75" y2="341.45000000000005" stroke="rgba(0,0,0,0.56)" stroke-width="1.2"/><line x1="765.75" y1="341.45000000000005" x2="765.75" y2="354.35" stroke="rgba(0,0,0,0.56)" stroke-width="1.2"/><line x1="765.75" y1="380.15" x2="765.75" y2="393.05" stroke="rgba(0,0,0,0.56)" stroke-width="1.2"/><line x1="765.75" y1="418.85" x2="765.75" y2="431.75" stroke="rgba(0,0,0,0.56)" stroke-width="1.2"/><line x1="765.75" y1="431.75" x2="765.75" y2="444.65000000000003" stroke="rgba(0,0,0,0.56)" stroke-width="1.2"/><line x1="765.75" y1="444.65000000000003" x2="765.75" y2="457.55" stroke="rgba(0,0,0,0.56)" stroke-width="1.2"/><line x1="765.75" y1="457.55" x2="765.75" y2="470.45" stroke="rgba(0,0,0,0.56)" stroke-width="1.2"/><line x1="765.75" y1="470.45" x2="765.75" y2="483.35" stroke="rgba(0,0,0,0.56)" stroke-width="1.2"/><line x1="765.75" y1="483.35" x2="765.75" y2="496.25" stroke="rgba(0,0,0,0.56)" stroke-width="1.2"/><line x1="765.75" y1="496.25" x2="765.75" y2="509.15000000000003" stroke="rgba(0,0,0,0.56)" stroke-width="1.2"/><line x1="765.75" y1="509.15000000000003" x2="765.75" y2="522.05" stroke="rgba(0,0,0,0.56)" stroke-width="1.2"/><line x1="765.75" y1="522.05" x2="765.75" y2="534.95" stroke="rgba(0,0,0,0.56)" stroke-width="1.2"/><line x1="765.75" y1="534.95" x2="765.75" y2="547.85" stroke="rgba(0,0,0,0.56)" stroke-width="1.2"/><line x1="765.75" y1="547.85" x2="765.75" y2="560.75" stroke="rgba(0,0,0,0.56)" stroke-width="1.2"/><line x1="765.75" y1="560.75" x2="765.75" y2="573.6500000000001" stroke="rgba(0,0,0,0.56)" stroke-width="1.2"/><line x1="765.75" y1="573.6500000000001" x2="765.75" y2="584.4" stroke="rgba(0,0,0,0.56)" stroke-width="1.2"/><line x1="818.5" y1="173.75" x2="818.5" y2="186.65" stroke="rgba(0,0,0,0.56)" stroke-width="1.2"/><line x1="818.5" y1="186.65" x2="818.5" y2="199.55" stroke="rgba(0,0,0,0.56)" stroke-width="1.2"/><line x1="818.5" y1="199.55" x2="818.5" y2="212.45" stroke="rgba(0,0,0,0.56)" stroke-width="1.2"/><line x1="818.5" y1="212.45" x2="818.5" y2="225.35" stroke="rgba(0,0,0,0.56)" stroke-width="1.2"/><line x1="818.5" y1="225.35" x2="818.5" y2="238.25" stroke="rgba(0,0,0,0.56)" stroke-width="1.2"/><line x1="818.5" y1="238.25" x2="818.5" y2="251.15" stroke="rgba(0,0,0,0.56)" stroke-width="1.2"/><line x1="818.5" y1="251.15" x2="818.5" y2="264.05" stroke="rgba(0,0,0,0.56)" stroke-width="1.2"/><line x1="818.5" y1="264.05" x2="818.5" y2="276.95" stroke="rgba(0,0,0,0.56)" stroke-width="1.2"/><line x1="818.5" y1="276.95" x2="818.5" y2="289.85" stroke="rgba(0,0,0,0.56)" stroke-width="1.2"/><line x1="818.5" y1="289.85" x2="818.5" y2="302.75" stroke="rgba(0,0,0,0.56)" stroke-width="1.2"/><line x1="818.5" y1="302.75" x2="818.5" y2="315.65" stroke="rgba(0,0,0,0.56)" stroke-width="1.2"/><line x1="818.5" y1="315.65" x2="818.5" y2="328.55" stroke="rgba(0,0,0,0.56)" stroke-width="1.2"/><line x1="818.5" y1="328.55" x2="818.5" y2="341.45000000000005" stroke="rgba(0,0,0,0.56)" stroke-width="1.2"/><line x1="818.5" y1="341.45000000000005" x2="818.5" y2="354.35" stroke="rgba(0,0,0,0.56)" stroke-width="1.2"/><line x1="818.5" y1="354.35" x2="818.5" y2="367.25" stroke="rgba(0,0,0,0.56)" stroke-width="1.2"/><line x1="818.5" y1="367.25" x2="818.5" y2="380.15" stroke="rgba(0,0,0,0.56)" stroke-width="1.2"/><line x1="818.5" y1="380.15" x2="818.5" y2="393.05" stroke="rgba(0,0,0,0.56)" stroke-width="1.2"/><line x1="818.5" y1="393.05" x2="818.5" y2="405.95000000000005" stroke="rgba(0,0,0,0.56)" stroke-width="1.2"/><line x1="818.5" y1="405.95000000000005" x2="818.5" y2="418.85" stroke="rgba(0,0,0,0.56)" stroke-width="1.2"/><line x1="818.5" y1="418.85" x2="818.5" y2="431.75" stroke="rgba(0,0,0,0.56)" stroke-width="1.2"/><line x1="818.5" y1="431.75" x2="818.5" y2="444.65000000000003" stroke="rgba(0,0,0,0.56)" stroke-width="1.2"/><line x1="818.5" y1="444.65000000000003" x2="818.5" y2="457.55" stroke="rgba(0,0,0,0.56)" stroke-width="1.2"/><line x1="818.5" y1="457.55" x2="818.5" y2="470.45" stroke="rgba(0,0,0,0.56)" stroke-width="1.2"/><line x1="818.5" y1="470.45" x2="818.5" y2="483.35" stroke="rgba(0,0,0,0.56)" stroke-width="1.2"/><line x1="818.5" y1="483.35" x2="818.5" y2="496.25" stroke="rgba(0,0,0,0.56)" stroke-width="1.2"/><line x1="818.5" y1="496.25" x2="818.5" y2="509.15000000000003" stroke="rgba(0,0,0,0.56)" stroke-width="1.2"/><line x1="818.5" y1="509.15000000000003" x2="818.5" y2="522.05" stroke="rgba(0,0,0,0.56)" stroke-width="1.2"/><line x1="818.5" y1="522.05" x2="818.5" y2="534.95" stroke="rgba(0,0,0,0.56)" stroke-width="1.2"/><line x1="818.5" y1="534.95" x2="818.5" y2="547.85" stroke="rgba(0,0,0,0.56)" stroke-width="1.2"/><line x1="818.5" y1="547.85" x2="818.5" y2="560.75" stroke="rgba(0,0,0,0.56)" stroke-width="1.2"/><line x1="818.5" y1="560.75" x2="818.5" y2="573.6500000000001" stroke="rgba(0,0,0,0.56)" stroke-width="1.2"/><line x1="818.5" y1="573.6500000000001" x2="818.5" y2="584.4" stroke="rgba(0,0,0,0.56)" stroke-width="1.2"/><line x1="879.5" y1="173.75" x2="879.5" y2="186.65" stroke="rgba(0,0,0,0.56)" stroke-width="1.2"/><line x1="879.5" y1="186.65" x2="879.5" y2="199.55" stroke="rgba(0,0,0,0.56)" stroke-width="1.2"/><line x1="879.5" y1="199.55" x2="879.5" y2="212.45" stroke="rgba(0,0,0,0.56)" stroke-width="1.2"/><line x1="879.5" y1="212.45" x2="879.5" y2="225.35" stroke="rgba(0,0,0,0.56)" stroke-width="1.2"/><line x1="879.5" y1="225.35" x2="879.5" y2="238.25" stroke="rgba(0,0,0,0.56)" stroke-width="1.2"/><line x1="879.5" y1="238.25" x2="879.5" y2="251.15" stroke="rgba(0,0,0,0.56)" stroke-width="1.2"/><line x1="879.5" y1="251.15" x2="879.5" y2="264.05" stroke="rgba(0,0,0,0.56)" stroke-width="1.2"/><line x1="879.5" y1="264.05" x2="879.5" y2="276.95" stroke="rgba(0,0,0,0.56)" stroke-width="1.2"/><line x1="879.5" y1="276.95" x2="879.5" y2="289.85" stroke="rgba(0,0,0,0.56)" stroke-width="1.2"/><line x1="879.5" y1="289.85" x2="879.5" y2="302.75" stroke="rgba(0,0,0,0.56)" stroke-width="1.2"/><line x1="879.5" y1="302.75" x2="879.5" y2="315.65" stroke="rgba(0,0,0,0.56)" stroke-width="1.2"/><line x1="879.5" y1="315.65" x2="879.5" y2="328.55" stroke="rgba(0,0,0,0.56)" stroke-width="1.2"/><line x1="879.5" y1="328.55" x2="879.5" y2="341.45000000000005" stroke="rgba(0,0,0,0.56)" stroke-width="1.2"/><line x1="879.5" y1="341.45000000000005" x2="879.5" y2="354.35" stroke="rgba(0,0,0,0.56)" stroke-width="1.2"/><line x1="879.5" y1="354.35" x2="879.5" y2="367.25" stroke="rgba(0,0,0,0.56)" stroke-width="1.2"/><line x1="879.5" y1="367.25" x2="879.5" y2="380.15" stroke="rgba(0,0,0,0.56)" stroke-width="1.2"/><line x1="879.5" y1="380.15" x2="879.5" y2="393.05" stroke="rgba(0,0,0,0.56)" stroke-width="1.2"/><line x1="879.5" y1="393.05" x2="879.5" y2="405.95000000000005" stroke="rgba(0,0,0,0.56)" stroke-width="1.2"/><line x1="879.5" y1="405.95000000000005" x2="879.5" y2="418.85" stroke="rgba(0,0,0,0.56)" stroke-width="1.2"/><line x1="879.5" y1="418.85" x2="879.5" y2="431.75" stroke="rgba(0,0,0,0.56)" stroke-width="1.2"/><line x1="879.5" y1="431.75" x2="879.5" y2="444.65000000000003" stroke="rgba(0,0,0,0.56)" stroke-width="1.2"/><line x1="879.5" y1="444.65000000000003" x2="879.5" y2="457.55" stroke="rgba(0,0,0,0.56)" stroke-width="1.2"/><line x1="879.5" y1="457.55" x2="879.5" y2="470.45" stroke="rgba(0,0,0,0.56)" stroke-width="1.2"/><line x1="879.5" y1="470.45" x2="879.5" y2="483.35" stroke="rgba(0,0,0,0.56)" stroke-width="1.2"/><line x1="879.5" y1="483.35" x2="879.5" y2="496.25" stroke="rgba(0,0,0,0.56)" stroke-width="1.2"/><line x1="879.5" y1="496.25" x2="879.5" y2="509.15000000000003" stroke="rgba(0,0,0,0.56)" stroke-width="1.2"/><line x1="879.5" y1="509.15000000000003" x2="879.5" y2="522.05" stroke="rgba(0,0,0,0.56)" stroke-width="1.2"/><line x1="879.5" y1="522.05" x2="879.5" y2="534.95" stroke="rgba(0,0,0,0.56)" stroke-width="1.2"/><line x1="879.5" y1="534.95" x2="879.5" y2="547.85" stroke="rgba(0,0,0,0.56)" stroke-width="1.2"/><line x1="879.5" y1="547.85" x2="879.5" y2="560.75" stroke="rgba(0,0,0,0.56)" stroke-width="1.2"/><line x1="879.5" y1="560.75" x2="879.5" y2="573.6500000000001" stroke="rgba(0,0,0,0.56)" stroke-width="1.2"/><line x1="879.5" y1="573.6500000000001" x2="879.5" y2="584.4" stroke="rgba(0,0,0,0.56)" stroke-width="1.2"/><line x1="947.5" y1="173.75" x2="947.5" y2="186.65" stroke="rgba(0,0,0,0.56)" stroke-width="1.2"/><line x1="947.5" y1="186.65" x2="947.5" y2="199.55" stroke="rgba(0,0,0,0.56)" stroke-width="1.2"/><line x1="947.5" y1="199.55" x2="947.5" y2="212.45" stroke="rgba(0,0,0,0.56)" stroke-width="1.2"/><line x1="947.5" y1="212.45" x2="947.5" y2="225.35" stroke="rgba(0,0,0,0.56)" stroke-width="1.2"/><line x1="947.5" y1="225.35" x2="947.5" y2="238.25" stroke="rgba(0,0,0,0.56)" stroke-width="1.2"/><line x1="947.5" y1="238.25" x2="947.5" y2="251.15" stroke="rgba(0,0,0,0.56)" stroke-width="1.2"/><line x1="947.5" y1="251.15" x2="947.5" y2="264.05" stroke="rgba(0,0,0,0.56)" stroke-width="1.2"/><line x1="947.5" y1="264.05" x2="947.5" y2="276.95" stroke="rgba(0,0,0,0.56)" stroke-width="1.2"/><line x1="947.5" y1="276.95" x2="947.5" y2="289.85" stroke="rgba(0,0,0,0.56)" stroke-width="1.2"/><line x1="947.5" y1="289.85" x2="947.5" y2="302.75" stroke="rgba(0,0,0,0.56)" stroke-width="1.2"/><line x1="947.5" y1="302.75" x2="947.5" y2="315.65" stroke="rgba(0,0,0,0.56)" stroke-width="1.2"/><line x1="947.5" y1="315.65" x2="947.5" y2="328.55" stroke="rgba(0,0,0,0.56)" stroke-width="1.2"/><line x1="947.5" y1="328.55" x2="947.5" y2="341.45000000000005" stroke="rgba(0,0,0,0.56)" stroke-width="1.2"/><line x1="947.5" y1="341.45000000000005" x2="947.5" y2="354.35" stroke="rgba(0,0,0,0.56)" stroke-width="1.2"/><line x1="947.5" y1="354.35" x2="947.5" y2="367.25" stroke="rgba(0,0,0,0.56)" stroke-width="1.2"/><line x1="947.5" y1="367.25" x2="947.5" y2="380.15" stroke="rgba(0,0,0,0.56)" stroke-width="1.2"/><line x1="947.5" y1="380.15" x2="947.5" y2="393.05" stroke="rgba(0,0,0,0.56)" stroke-width="1.2"/><line x1="947.5" y1="393.05" x2="947.5" y2="405.95000000000005" stroke="rgba(0,0,0,0.56)" stroke-width="1.2"/><line x1="947.5" y1="405.95000000000005" x2="947.5" y2="418.85" stroke="rgba(0,0,0,0.56)" stroke-width="1.2"/><line x1="947.5" y1="418.85" x2="947.5" y2="431.75" stroke="rgba(0,0,0,0.56)" stroke-width="1.2"/><line x1="947.5" y1="431.75" x2="947.5" y2="444.65000000000003" stroke="rgba(0,0,0,0.56)" stroke-width="1.2"/><line x1="947.5" y1="444.65000000000003" x2="947.5" y2="457.55" stroke="rgba(0,0,0,0.56)" stroke-width="1.2"/><line x1="947.5" y1="457.55" x2="947.5" y2="470.45" stroke="rgba(0,0,0,0.56)" stroke-width="1.2"/><line x1="947.5" y1="470.45" x2="947.5" y2="483.35" stroke="rgba(0,0,0,0.56)" stroke-width="1.2"/><line x1="947.5" y1="483.35" x2="947.5" y2="496.25" stroke="rgba(0,0,0,0.56)" stroke-width="1.2"/><line x1="947.5" y1="496.25" x2="947.5" y2="509.15000000000003" stroke="rgba(0,0,0,0.56)" stroke-width="1.2"/><line x1="947.5" y1="509.15000000000003" x2="947.5" y2="522.05" stroke="rgba(0,0,0,0.56)" stroke-width="1.2"/><line x1="947.5" y1="522.05" x2="947.5" y2="534.95" stroke="rgba(0,0,0,0.56)" stroke-width="1.2"/><line x1="947.5" y1="534.95" x2="947.5" y2="547.85" stroke="rgba(0,0,0,0.56)" stroke-width="1.2"/><line x1="947.5" y1="547.85" x2="947.5" y2="560.75" stroke="rgba(0,0,0,0.56)" stroke-width="1.2"/><line x1="947.5" y1="560.75" x2="947.5" y2="573.6500000000001" stroke="rgba(0,0,0,0.56)" stroke-width="1.2"/><line x1="947.5" y1="573.6500000000001" x2="947.5" y2="584.4" stroke="rgba(0,0,0,0.56)" stroke-width="1.2"/><line x1="1018.75" y1="173.75" x2="1018.75" y2="186.65" stroke="rgba(0,0,0,0.56)" stroke-width="1.2"/><line x1="1018.75" y1="186.65" x2="1018.75" y2="199.55" stroke="rgba(0,0,0,0.56)" stroke-width="1.2"/><line x1="1018.75" y1="199.55" x2="1018.75" y2="212.45" stroke="rgba(0,0,0,0.56)" stroke-width="1.2"/><line x1="1018.75" y1="212.45" x2="1018.75" y2="225.35" stroke="rgba(0,0,0,0.56)" stroke-width="1.2"/><line x1="1018.75" y1="225.35" x2="1018.75" y2="238.25" stroke="rgba(0,0,0,0.56)" stroke-width="1.2"/><line x1="1018.75" y1="238.25" x2="1018.75" y2="251.15" stroke="rgba(0,0,0,0.56)" stroke-width="1.2"/><line x1="1018.75" y1="251.15" x2="1018.75" y2="264.05" stroke="rgba(0,0,0,0.56)" stroke-width="1.2"/><line x1="1018.75" y1="264.05" x2="1018.75" y2="276.95" stroke="rgba(0,0,0,0.56)" stroke-width="1.2"/><line x1="1018.75" y1="276.95" x2="1018.75" y2="289.85" stroke="rgba(0,0,0,0.56)" stroke-width="1.2"/><line x1="1018.75" y1="289.85" x2="1018.75" y2="302.75" stroke="rgba(0,0,0,0.56)" stroke-width="1.2"/><line x1="1018.75" y1="302.75" x2="1018.75" y2="315.65" stroke="rgba(0,0,0,0.56)" stroke-width="1.2"/><line x1="1018.75" y1="315.65" x2="1018.75" y2="328.55" stroke="rgba(0,0,0,0.56)" stroke-width="1.2"/><line x1="1018.75" y1="328.55" x2="1018.75" y2="341.45000000000005" stroke="rgba(0,0,0,0.56)" stroke-width="1.2"/><line x1="1018.75" y1="341.45000000000005" x2="1018.75" y2="354.35" stroke="rgba(0,0,0,0.56)" stroke-width="1.2"/><line x1="1018.75" y1="354.35" x2="1018.75" y2="367.25" stroke="rgba(0,0,0,0.56)" stroke-width="1.2"/><line x1="1018.75" y1="367.25" x2="1018.75" y2="380.15" stroke="rgba(0,0,0,0.56)" stroke-width="1.2"/><line x1="1018.75" y1="380.15" x2="1018.75" y2="393.05" stroke="rgba(0,0,0,0.56)" stroke-width="1.2"/><line x1="1018.75" y1="393.05" x2="1018.75" y2="405.95000000000005" stroke="rgba(0,0,0,0.56)" stroke-width="1.2"/><line x1="1018.75" y1="405.95000000000005" x2="1018.75" y2="418.85" stroke="rgba(0,0,0,0.56)" stroke-width="1.2"/><line x1="1018.75" y1="418.85" x2="1018.75" y2="431.75" stroke="rgba(0,0,0,0.56)" stroke-width="1.2"/><line x1="1018.75" y1="431.75" x2="1018.75" y2="444.65000000000003" stroke="rgba(0,0,0,0.56)" stroke-width="1.2"/><line x1="1018.75" y1="444.65000000000003" x2="1018.75" y2="457.55" stroke="rgba(0,0,0,0.56)" stroke-width="1.2"/><line x1="1018.75" y1="457.55" x2="1018.75" y2="470.45" stroke="rgba(0,0,0,0.56)" stroke-width="1.2"/><line x1="1018.75" y1="470.45" x2="1018.75" y2="483.35" stroke="rgba(0,0,0,0.56)" stroke-width="1.2"/><line x1="1018.75" y1="483.35" x2="1018.75" y2="496.25" stroke="rgba(0,0,0,0.56)" stroke-width="1.2"/><line x1="1018.75" y1="496.25" x2="1018.75" y2="509.15000000000003" stroke="rgba(0,0,0,0.56)" stroke-width="1.2"/><line x1="1018.75" y1="509.15000000000003" x2="1018.75" y2="522.05" stroke="rgba(0,0,0,0.56)" stroke-width="1.2"/><line x1="1018.75" y1="522.05" x2="1018.75" y2="534.95" stroke="rgba(0,0,0,0.56)" stroke-width="1.2"/><line x1="1018.75" y1="534.95" x2="1018.75" y2="547.85" stroke="rgba(0,0,0,0.56)" stroke-width="1.2"/><line x1="1018.75" y1="547.85" x2="1018.75" y2="560.75" stroke="rgba(0,0,0,0.56)" stroke-width="1.2"/><line x1="1018.75" y1="560.75" x2="1018.75" y2="573.6500000000001" stroke="rgba(0,0,0,0.56)" stroke-width="1.2"/><line x1="1018.75" y1="573.6500000000001" x2="1018.75" y2="584.4" stroke="rgba(0,0,0,0.56)" stroke-width="1.2"/><line x1="1086.5" y1="173.75" x2="1086.5" y2="186.65" stroke="rgba(0,0,0,0.56)" stroke-width="1.2"/><line x1="1086.5" y1="186.65" x2="1086.5" y2="199.55" stroke="rgba(0,0,0,0.56)" stroke-width="1.2"/><line x1="1086.5" y1="199.55" x2="1086.5" y2="212.45" stroke="rgba(0,0,0,0.56)" stroke-width="1.2"/><line x1="1086.5" y1="212.45" x2="1086.5" y2="225.35" stroke="rgba(0,0,0,0.56)" stroke-width="1.2"/><line x1="1086.5" y1="225.35" x2="1086.5" y2="238.25" stroke="rgba(0,0,0,0.56)" stroke-width="1.2"/><line x1="1086.5" y1="238.25" x2="1086.5" y2="251.15" stroke="rgba(0,0,0,0.56)" stroke-width="1.2"/><line x1="1086.5" y1="251.15" x2="1086.5" y2="264.05" stroke="rgba(0,0,0,0.56)" stroke-width="1.2"/><line x1="1086.5" y1="264.05" x2="1086.5" y2="276.95" stroke="rgba(0,0,0,0.56)" stroke-width="1.2"/><line x1="1086.5" y1="276.95" x2="1086.5" y2="289.85" stroke="rgba(0,0,0,0.56)" stroke-width="1.2"/><line x1="1086.5" y1="289.85" x2="1086.5" y2="302.75" stroke="rgba(0,0,0,0.56)" stroke-width="1.2"/><line x1="1086.5" y1="302.75" x2="1086.5" y2="315.65" stroke="rgba(0,0,0,0.56)" stroke-width="1.2"/><line x1="1086.5" y1="315.65" x2="1086.5" y2="328.55" stroke="rgba(0,0,0,0.56)" stroke-width="1.2"/><line x1="1086.5" y1="328.55" x2="1086.5" y2="341.45000000000005" stroke="rgba(0,0,0,0.56)" stroke-width="1.2"/><line x1="1086.5" y1="341.45000000000005" x2="1086.5" y2="354.35" stroke="rgba(0,0,0,0.56)" stroke-width="1.2"/><line x1="1086.5" y1="354.35" x2="1086.5" y2="367.25" stroke="rgba(0,0,0,0.56)" stroke-width="1.2"/><line x1="1086.5" y1="367.25" x2="1086.5" y2="380.15" stroke="rgba(0,0,0,0.56)" stroke-width="1.2"/><line x1="1086.5" y1="380.15" x2="1086.5" y2="393.05" stroke="rgba(0,0,0,0.56)" stroke-width="1.2"/><line x1="1086.5" y1="393.05" x2="1086.5" y2="405.95000000000005" stroke="rgba(0,0,0,0.56)" stroke-width="1.2"/><line x1="1086.5" y1="405.95000000000005" x2="1086.5" y2="418.85" stroke="rgba(0,0,0,0.56)" stroke-width="1.2"/><line x1="1086.5" y1="418.85" x2="1086.5" y2="431.75" stroke="rgba(0,0,0,0.56)" stroke-width="1.2"/><line x1="1086.5" y1="431.75" x2="1086.5" y2="444.65000000000003" stroke="rgba(0,0,0,0.56)" stroke-width="1.2"/><line x1="1086.5" y1="444.65000000000003" x2="1086.5" y2="457.55" stroke="rgba(0,0,0,0.56)" stroke-width="1.2"/><line x1="1086.5" y1="457.55" x2="1086.5" y2="470.45" stroke="rgba(0,0,0,0.56)" stroke-width="1.2"/><line x1="1086.5" y1="470.45" x2="1086.5" y2="483.35" stroke="rgba(0,0,0,0.56)" stroke-width="1.2"/><line x1="1086.5" y1="483.35" x2="1086.5" y2="496.25" stroke="rgba(0,0,0,0.56)" stroke-width="1.2"/><line x1="1086.5" y1="496.25" x2="1086.5" y2="509.15000000000003" stroke="rgba(0,0,0,0.56)" stroke-width="1.2"/><line x1="1086.5" y1="509.15000000000003" x2="1086.5" y2="522.05" stroke="rgba(0,0,0,0.56)" stroke-width="1.2"/><line x1="1086.5" y1="522.05" x2="1086.5" y2="534.95" stroke="rgba(0,0,0,0.56)" stroke-width="1.2"/><line x1="1086.5" y1="534.95" x2="1086.5" y2="547.85" stroke="rgba(0,0,0,0.56)" stroke-width="1.2"/><line x1="1086.5" y1="547.85" x2="1086.5" y2="560.75" stroke="rgba(0,0,0,0.56)" stroke-width="1.2"/><line x1="1086.5" y1="560.75" x2="1086.5" y2="573.6500000000001" stroke="rgba(0,0,0,0.56)" stroke-width="1.2"/><line x1="1086.5" y1="573.6500000000001" x2="1086.5" y2="584.4" stroke="rgba(0,0,0,0.56)" stroke-width="1.2"/><line x1="1151.5" y1="173.75" x2="1151.5" y2="186.65" stroke="rgba(0,0,0,0.56)" stroke-width="1.2"/><line x1="1151.5" y1="186.65" x2="1151.5" y2="199.55" stroke="rgba(0,0,0,0.56)" stroke-width="1.2"/><line x1="1151.5" y1="199.55" x2="1151.5" y2="212.45" stroke="rgba(0,0,0,0.56)" stroke-width="1.2"/><line x1="1151.5" y1="212.45" x2="1151.5" y2="225.35" stroke="rgba(0,0,0,0.56)" stroke-width="1.2"/><line x1="1151.5" y1="225.35" x2="1151.5" y2="238.25" stroke="rgba(0,0,0,0.56)" stroke-width="1.2"/><line x1="1151.5" y1="238.25" x2="1151.5" y2="251.15" stroke="rgba(0,0,0,0.56)" stroke-width="1.2"/><line x1="1151.5" y1="251.15" x2="1151.5" y2="264.05" stroke="rgba(0,0,0,0.56)" stroke-width="1.2"/><line x1="1151.5" y1="264.05" x2="1151.5" y2="276.95" stroke="rgba(0,0,0,0.56)" stroke-width="1.2"/><line x1="1151.5" y1="276.95" x2="1151.5" y2="289.85" stroke="rgba(0,0,0,0.56)" stroke-width="1.2"/><line x1="1151.5" y1="289.85" x2="1151.5" y2="302.75" stroke="rgba(0,0,0,0.56)" stroke-width="1.2"/><line x1="1151.5" y1="302.75" x2="1151.5" y2="315.65" stroke="rgba(0,0,0,0.56)" stroke-width="1.2"/><line x1="1151.5" y1="315.65" x2="1151.5" y2="328.55" stroke="rgba(0,0,0,0.56)" stroke-width="1.2"/><line x1="1151.5" y1="328.55" x2="1151.5" y2="341.45000000000005" stroke="rgba(0,0,0,0.56)" stroke-width="1.2"/><line x1="1151.5" y1="341.45000000000005" x2="1151.5" y2="354.35" stroke="rgba(0,0,0,0.56)" stroke-width="1.2"/><line x1="1151.5" y1="354.35" x2="1151.5" y2="367.25" stroke="rgba(0,0,0,0.56)" stroke-width="1.2"/><line x1="1151.5" y1="367.25" x2="1151.5" y2="380.15" stroke="rgba(0,0,0,0.56)" stroke-width="1.2"/><line x1="1151.5" y1="380.15" x2="1151.5" y2="393.05" stroke="rgba(0,0,0,0.56)" stroke-width="1.2"/><line x1="1151.5" y1="393.05" x2="1151.5" y2="405.95000000000005" stroke="rgba(0,0,0,0.56)" stroke-width="1.2"/><line x1="1151.5" y1="405.95000000000005" x2="1151.5" y2="418.85" stroke="rgba(0,0,0,0.56)" stroke-width="1.2"/><line x1="1151.5" y1="418.85" x2="1151.5" y2="431.75" stroke="rgba(0,0,0,0.56)" stroke-width="1.2"/><line x1="1151.5" y1="431.75" x2="1151.5" y2="444.65000000000003" stroke="rgba(0,0,0,0.56)" stroke-width="1.2"/><line x1="1151.5" y1="444.65000000000003" x2="1151.5" y2="457.55" stroke="rgba(0,0,0,0.56)" stroke-width="1.2"/><line x1="1151.5" y1="457.55" x2="1151.5" y2="470.45" stroke="rgba(0,0,0,0.56)" stroke-width="1.2"/><line x1="1151.5" y1="470.45" x2="1151.5" y2="483.35" stroke="rgba(0,0,0,0.56)" stroke-width="1.2"/><line x1="1151.5" y1="483.35" x2="1151.5" y2="496.25" stroke="rgba(0,0,0,0.56)" stroke-width="1.2"/><line x1="1151.5" y1="496.25" x2="1151.5" y2="509.15000000000003" stroke="rgba(0,0,0,0.56)" stroke-width="1.2"/><line x1="1151.5" y1="509.15000000000003" x2="1151.5" y2="522.05" stroke="rgba(0,0,0,0.56)" stroke-width="1.2"/><line x1="1151.5" y1="522.05" x2="1151.5" y2="534.95" stroke="rgba(0,0,0,0.56)" stroke-width="1.2"/><line x1="1151.5" y1="534.95" x2="1151.5" y2="547.85" stroke="rgba(0,0,0,0.56)" stroke-width="1.2"/><line x1="1151.5" y1="547.85" x2="1151.5" y2="560.75" stroke="rgba(0,0,0,0.56)" stroke-width="1.2"/><line x1="1151.5" y1="560.75" x2="1151.5" y2="573.6500000000001" stroke="rgba(0,0,0,0.56)" stroke-width="1.2"/><line x1="1151.5" y1="573.6500000000001" x2="1151.5" y2="584.4" stroke="rgba(0,0,0,0.56)" stroke-width="1.2"/><line x1="1215" y1="173.75" x2="1215" y2="186.65" stroke="#b9ad80" stroke-width="1.2"/><line x1="1215" y1="186.65" x2="1215" y2="199.55" stroke="#b9ad80" stroke-width="1.2"/><line x1="1215" y1="199.55" x2="1215" y2="212.45" stroke="#b9ad80" stroke-width="1.2"/><line x1="1215" y1="212.45" x2="1215" y2="225.35" stroke="#b9ad80" stroke-width="1.2"/><line x1="1215" y1="225.35" x2="1215" y2="238.25" stroke="#b9ad80" stroke-width="1.2"/><line x1="1215" y1="238.25" x2="1215" y2="251.15" stroke="#b9ad80" stroke-width="1.2"/><line x1="1215" y1="251.15" x2="1215" y2="264.05" stroke="#b9ad80" stroke-width="1.2"/><line x1="1215" y1="264.05" x2="1215" y2="276.95" stroke="#b9ad80" stroke-width="1.2"/><line x1="1215" y1="276.95" x2="1215" y2="289.85" stroke="#b9ad80" stroke-width="1.2"/><line x1="1215" y1="289.85" x2="1215" y2="302.75" stroke="#b9ad80" stroke-width="1.2"/><line x1="1215" y1="302.75" x2="1215" y2="315.65" stroke="#b9ad80" stroke-width="1.2"/><line x1="1215" y1="315.65" x2="1215" y2="328.55" stroke="#b9ad80" stroke-width="1.2"/><line x1="1215" y1="328.55" x2="1215" y2="341.45000000000005" stroke="#b9ad80" stroke-width="1.2"/><line x1="1215" y1="341.45000000000005" x2="1215" y2="354.35" stroke="#b9ad80" stroke-width="1.2"/><line x1="1215" y1="354.35" x2="1215" y2="367.25" stroke="#b9ad80" stroke-width="1.2"/><line x1="1215" y1="367.25" x2="1215" y2="380.15" stroke="#b9ad80" stroke-width="1.2"/><line x1="1215" y1="380.15" x2="1215" y2="393.05" stroke="#b9ad80" stroke-width="1.2"/><line x1="1215" y1="393.05" x2="1215" y2="405.95000000000005" stroke="#b9ad80" stroke-width="1.2"/><line x1="1215" y1="405.95000000000005" x2="1215" y2="418.85" stroke="#b9ad80" stroke-width="1.2"/><line x1="1215" y1="418.85" x2="1215" y2="431.75" stroke="#b9ad80" stroke-width="1.2"/><line x1="1215" y1="431.75" x2="1215" y2="444.65000000000003" stroke="#b9ad80" stroke-width="1.2"/><line x1="1215" y1="444.65000000000003" x2="1215" y2="457.55" stroke="#b9ad80" stroke-width="1.2"/><line x1="1215" y1="457.55" x2="1215" y2="470.45" stroke="#b9ad80" stroke-width="1.2"/><line x1="1215" y1="470.45" x2="1215" y2="483.35" stroke="#b9ad80" stroke-width="1.2"/><line x1="1215" y1="483.35" x2="1215" y2="496.25" stroke="#b9ad80" stroke-width="1.2"/><line x1="1215" y1="496.25" x2="1215" y2="509.15000000000003" stroke="#b9ad80" stroke-width="1.2"/><line x1="1215" y1="509.15000000000003" x2="1215" y2="522.05" stroke="#b9ad80" stroke-width="1.2"/><line x1="1215" y1="522.05" x2="1215" y2="534.95" stroke="#b9ad80" stroke-width="1.2"/><line x1="1215" y1="534.95" x2="1215" y2="547.85" stroke="#b9ad80" stroke-width="1.2"/><line x1="1215" y1="547.85" x2="1215" y2="560.75" stroke="#b9ad80" stroke-width="1.2"/><line x1="1215" y1="560.75" x2="1215" y2="573.6500000000001" stroke="#b9ad80" stroke-width="1.2"/><line x1="1215" y1="573.6500000000001" x2="1215" y2="584.4" stroke="#b9ad80" stroke-width="1.2"/></svg>
<div class="t" style="left:55.05px;top:134.70px;font-size:9.2px;color:#454545;z-index:3;">2</div>
<div class="t" style="left:55.05px;top:168.15px;font-size:9.2px;color:#454545;z-index:3;">3</div>
<div class="t" style="left:55.09px;top:181.05px;font-size:9.2px;color:#454545;z-index:3;">4</div>
<div class="t" style="left:55.05px;top:193.95px;font-size:9.2px;color:#454545;z-index:3;">5</div>
<div class="t" style="left:55.00px;top:206.85px;font-size:9.2px;color:#454545;z-index:3;">6</div>
<div class="t" style="left:55.05px;top:219.75px;font-size:9.2px;color:#454545;z-index:3;">7</div>
<div class="t" style="left:55.02px;top:232.65px;font-size:9.2px;color:#454545;z-index:3;">8</div>
<div class="t" style="left:55.05px;top:245.55px;font-size:9.2px;color:#454545;z-index:3;">9</div>
<div class="t" style="left:52.31px;top:258.45px;font-size:9.2px;color:#454545;z-index:3;">10</div>
<div class="t" style="left:52.70px;top:271.35px;font-size:9.2px;color:#454545;z-index:3;">11</div>
<div class="t" style="left:52.38px;top:284.25px;font-size:9.2px;color:#454545;z-index:3;">12</div>
<div class="t" style="left:52.33px;top:297.15px;font-size:9.2px;color:#454545;z-index:3;">13</div>
<div class="t" style="left:52.29px;top:310.05px;font-size:9.2px;color:#454545;z-index:3;">14</div>
<div class="t" style="left:52.33px;top:322.95px;font-size:9.2px;color:#454545;z-index:3;">15</div>
<div class="t" style="left:52.33px;top:335.85px;font-size:9.2px;color:#454545;z-index:3;">16</div>
<div class="t" style="left:52.38px;top:348.75px;font-size:9.2px;color:#454545;z-index:3;">17</div>
<div class="t" style="left:52.33px;top:361.65px;font-size:9.2px;color:#454545;z-index:3;">18</div>
<div class="t" style="left:52.36px;top:374.55px;font-size:9.2px;color:#454545;z-index:3;">19</div>
<div class="t" style="left:52.43px;top:387.45px;font-size:9.2px;color:#454545;z-index:3;">20</div>
<div class="t" style="left:52.47px;top:400.35px;font-size:9.2px;color:#454545;z-index:3;">21</div>
<div class="t" style="left:52.49px;top:413.25px;font-size:9.2px;color:#454545;z-index:3;">22</div>
<div class="t" style="left:52.45px;top:426.15px;font-size:9.2px;color:#454545;z-index:3;">23</div>
<div class="t" style="left:52.40px;top:439.05px;font-size:9.2px;color:#454545;z-index:3;">24</div>
<div class="t" style="left:52.45px;top:451.95px;font-size:9.2px;color:#454545;z-index:3;">25</div>
<div class="t" style="left:52.45px;top:464.85px;font-size:9.2px;color:#454545;z-index:3;">26</div>
<div class="t" style="left:52.49px;top:477.75px;font-size:9.2px;color:#454545;z-index:3;">27</div>
<div class="t" style="left:52.45px;top:490.65px;font-size:9.2px;color:#454545;z-index:3;">28</div>
<div class="t" style="left:52.47px;top:503.55px;font-size:9.2px;color:#454545;z-index:3;">29</div>
<div class="t" style="left:52.47px;top:516.45px;font-size:9.2px;color:#454545;z-index:3;">30</div>
<div class="t" style="left:52.52px;top:529.35px;font-size:9.2px;color:#454545;z-index:3;">31</div>
<div class="t" style="left:52.54px;top:542.25px;font-size:9.2px;color:#454545;z-index:3;">32</div>
<div class="t" style="left:52.49px;top:555.15px;font-size:9.2px;color:#454545;z-index:3;">33</div>
<div class="t" style="left:52.45px;top:568.05px;font-size:9.2px;color:#454545;z-index:3;">34</div>
<div class="t" style="left:52.49px;top:580.95px;font-size:9.2px;color:#454545;z-index:3;">35</div>
<svg width="1280" height="703" style="z-index:3"><polygon points="65,95 65,107 53,107" fill="#d6d6d6"/></svg>
<div class="t" style="left:74.50px;width:41.75px;text-align:center;top:100.15px;font-size:8.8px;color:#1a6a35;z-index:3">Y</div>
<div class="t" style="left:116.25px;width:37.75px;text-align:center;top:100.15px;font-size:8.8px;color:#1a6a35;z-index:3">Z</div>
<div class="t" style="left:154.00px;width:69.00px;text-align:center;top:100.15px;font-size:8.8px;color:#1a6a35;z-index:3">AA</div>
<div class="t" style="left:223.00px;width:89.50px;text-align:center;top:100.15px;font-size:8.8px;color:#1a6a35;z-index:3">AB</div>
<div class="t" style="left:312.50px;width:80.00px;text-align:center;top:100.15px;font-size:8.8px;color:#1a6a35;z-index:3">AC</div>
<div class="t" style="left:392.50px;width:44.25px;text-align:center;top:100.15px;font-size:8.8px;color:#1a6a35;z-index:3">AD</div>
<div class="t" style="left:436.75px;width:150.75px;text-align:center;top:100.15px;font-size:8.8px;color:#1a6a35;z-index:3">AE</div>
<div class="t" style="left:587.50px;width:64.00px;text-align:center;top:100.15px;font-size:8.8px;color:#1a6a35;z-index:3">AF</div>
<div class="t" style="left:651.50px;width:114.25px;text-align:center;top:100.15px;font-size:8.8px;color:#1a6a35;z-index:3">AG</div>
<div class="t" style="left:765.75px;width:52.75px;text-align:center;top:100.15px;font-size:8.8px;color:#1a6a35;z-index:3">AH</div>
<div class="t" style="left:818.50px;width:61.00px;text-align:center;top:100.15px;font-size:8.8px;color:#1a6a35;z-index:3">AI</div>
<div class="t" style="left:879.50px;width:68.00px;text-align:center;top:100.15px;font-size:8.8px;color:#1a6a35;z-index:3">AJ</div>
<div class="t" style="left:947.50px;width:71.25px;text-align:center;top:100.15px;font-size:8.8px;color:#1a6a35;z-index:3">AK</div>
<div class="t" style="left:1018.75px;width:67.75px;text-align:center;top:100.15px;font-size:8.8px;color:#1a6a35;z-index:3">AL</div>
<div class="t" style="left:1086.50px;width:65.00px;text-align:center;top:100.15px;font-size:8.8px;color:#1a6a35;z-index:3">AM</div>
<div class="t" style="left:1151.50px;width:63.50px;text-align:center;top:100.15px;font-size:8.8px;color:#1a6a35;z-index:3">AN</div>
<div class="t" style="left:340.73px;top:124.90px;font-size:10.2px;font-weight:bold;color:#111;z-index:3;transform:scaleX(1.0134);transform-origin:0 0;">PROPOSED TAXONOMY</div>
<div class="t" style="left:1097.89px;top:117.80px;font-size:9.8px;font-weight:bold;color:#111;z-index:3;transform:scaleX(1.0471);transform-origin:0 0;">SPECIFY PROPOSED</div>
<div class="t" style="left:1128.13px;top:131.70px;font-size:9.8px;font-weight:bold;color:#111;z-index:3;transform:scaleX(1.0672);transform-origin:0 0;">CHANGE</div>
<div class="t" style="left:76.32px;top:157.80px;font-size:7.0px;font-weight:bold;color:#111;z-index:3;">Order</div>
<div class="t" style="left:118.14px;top:157.80px;font-size:7.0px;font-weight:bold;color:#111;z-index:3;transform:scaleX(0.9903);transform-origin:0 0;">Suborder</div>
<div class="t" style="left:155.70px;top:157.80px;font-size:7.0px;font-weight:bold;color:#111;z-index:3;transform:scaleX(0.8862);transform-origin:0 0;">Family</div>
<div class="t" style="left:224.90px;top:157.80px;font-size:7.0px;font-weight:bold;color:#111;z-index:3;transform:scaleX(0.9333);transform-origin:0 0;">Subfamily</div>
<div class="t" style="left:314.33px;top:157.80px;font-size:7.0px;font-weight:bold;color:#111;z-index:3;transform:scaleX(0.9712);transform-origin:0 0;">Genus</div>
<div class="t" style="left:394.40px;top:157.80px;font-size:7.0px;font-weight:bold;color:#111;z-index:3;transform:scaleX(0.9384);transform-origin:0 0;">Subgenus</div>
<div class="t" style="left:438.65px;top:157.80px;font-size:7.0px;font-weight:bold;color:#111;z-index:3;transform:scaleX(0.9395);transform-origin:0 0;">Species</div>
<div class="t" style="left:591.40px;top:152.40px;font-size:6.2px;color:#222;z-index:3;transform:scaleX(1.0121);transform-origin:0 0;"><b>Exemplar</b> GenBank</div>
<div class="t" style="left:593.70px;top:161.90px;font-size:6.2px;color:#222;z-index:3;transform:scaleX(0.9687);transform-origin:0 0;">Accession Number</div>
<div class="t" style="left:693.88px;top:152.40px;font-size:7.0px;font-weight:bold;color:#111;z-index:3;transform:scaleX(0.9298);transform-origin:0 0;">Exemplar</div>
<div class="t" style="left:691.46px;top:162.20px;font-size:7.0px;color:#222;z-index:3;transform:scaleX(1.0183);transform-origin:0 0;">virus name</div>
<div class="t" style="left:773.97px;top:152.40px;font-size:7.0px;font-weight:bold;color:#111;z-index:3;transform:scaleX(0.9542);transform-origin:0 0;">Virus name</div>
<div class="t" style="left:779.79px;top:162.20px;font-size:7.0px;font-weight:bold;color:#111;z-index:3;transform:scaleX(1.0125);transform-origin:0 0;">abbrev</div>
<div class="t" style="left:803.2px;top:159.6px;font-size:4.5px;font-weight:bold;color:#111;z-index:3">&#39;</div>
<div class="t" style="left:834.18px;top:147.20px;font-size:7.0px;font-weight:bold;color:#111;z-index:3;transform:scaleX(0.9169);transform-origin:0 0;">Exemplar</div>
<div class="t" style="left:837.92px;top:157.30px;font-size:7.0px;color:#222;z-index:3;transform:scaleX(1.0637);transform-origin:0 0;">isolate</div>
<div class="t" style="left:829.71px;top:167.10px;font-size:7.0px;color:#222;z-index:3;transform:scaleX(1.0294);transform-origin:0 0;">designation</div>
<div class="t" style="left:883.13px;top:157.50px;font-size:7.0px;font-weight:bold;color:#111;z-index:3;transform:scaleX(0.9707);transform-origin:0 0;">Genome coverage</div>
<div class="t" style="left:967.91px;top:152.30px;font-size:7.0px;font-weight:bold;color:#111;z-index:3;transform:scaleX(1.0191);transform-origin:0 0;">Genome</div>
<div class="t" style="left:962.23px;top:162.20px;font-size:7.0px;font-weight:bold;color:#111;z-index:3;transform:scaleX(0.9776);transform-origin:0 0;">composition</div>
<div class="t" style="left:1030.94px;top:157.60px;font-size:7.0px;font-weight:bold;color:#111;z-index:3;transform:scaleX(1.0067);transform-origin:0 0;">Host/Source</div>
<div class="t" style="left:1106.54px;top:157.60px;font-size:7.0px;font-weight:bold;color:#111;z-index:3;transform:scaleX(0.9232);transform-origin:0 0;">Change</div>
<div class="t" style="left:1175.08px;top:157.60px;font-size:7.0px;font-weight:bold;color:#111;z-index:3;transform:scaleX(0.9124);transform-origin:0 0;">Rank</div>
<div class="t" style="left:76.11px;top:180.75px;font-size:8.7px;font-style:italic;color:#161616;z-index:3;transform:scaleX(1.0297);transform-origin:0 0;-webkit-text-stroke:0.12px #161616;">Caudovirales</div>
<div class="t" style="left:155.83px;top:180.75px;font-size:8.7px;font-style:italic;color:#161616;z-index:3;transform:scaleX(1.0512);transform-origin:0 0;-webkit-text-stroke:0.12px #161616;">Siphoviridae</div>
<div class="t" style="left:224.65px;top:180.75px;font-size:8.7px;font-style:italic;color:#e0150c;z-index:3;transform:scaleX(1.0380);transform-origin:0 0;-webkit-text-stroke:0.12px #e0150c;">Gclasvirinae</div>
<div class="t" style="left:880.95px;top:180.75px;font-size:8.7px;color:#161616;z-index:3;transform:scaleX(0.9317);transform-origin:0 0;-webkit-text-stroke:0.12px #161616;">Please select</div>
<div class="t" style="left:948.95px;top:180.75px;font-size:8.7px;color:#161616;z-index:3;transform:scaleX(0.9317);transform-origin:0 0;-webkit-text-stroke:0.12px #161616;">Please select</div>
<div class="t" style="left:1020.27px;top:180.75px;font-size:8.7px;color:#161616;z-index:3;transform:scaleX(1.0177);transform-origin:0 0;-webkit-text-stroke:0.12px #161616;">bacteria</div>
<div class="t" style="left:1088.18px;top:180.75px;font-size:8.7px;color:#161616;z-index:3;transform:scaleX(0.9554);transform-origin:0 0;-webkit-text-stroke:0.12px #161616;">Create new</div>
<div class="t" style="left:1153.33px;top:180.75px;font-size:8.7px;color:#161616;z-index:3;transform:scaleX(1.0357);transform-origin:0 0;-webkit-text-stroke:0.12px #161616;">subfamily</div>
<div class="t" style="left:76.11px;top:193.65px;font-size:8.7px;font-style:italic;color:#161616;z-index:3;transform:scaleX(1.0297);transform-origin:0 0;-webkit-text-stroke:0.12px #161616;">Caudovirales</div>
<div class="t" style="left:155.83px;top:193.65px;font-size:8.7px;font-style:italic;color:#161616;z-index:3;transform:scaleX(1.0512);transform-origin:0 0;-webkit-text-stroke:0.12px #161616;">Siphoviridae</div>
<div class="t" style="left:224.65px;top:193.65px;font-size:8.7px;font-style:italic;color:#e0150c;z-index:3;transform:scaleX(1.0380);transform-origin:0 0;-webkit-text-stroke:0.12px #e0150c;">Gclasvirinae</div>
<div class="t" style="left:314.33px;top:193.65px;font-size:8.7px;font-style:italic;color:#161616;z-index:3;transform:scaleX(1.0229);transform-origin:0 0;-webkit-text-stroke:0.12px #161616;">Liefievirus</div>
<div class="t" style="left:880.95px;top:193.65px;font-size:8.7px;color:#161616;z-index:3;transform:scaleX(0.9317);transform-origin:0 0;-webkit-text-stroke:0.12px #161616;">Please select</div>
<div class="t" style="left:948.95px;top:193.65px;font-size:8.7px;color:#161616;z-index:3;transform:scaleX(0.9317);transform-origin:0 0;-webkit-text-stroke:0.12px #161616;">Please select</div>
<div class="t" style="left:1020.27px;top:193.65px;font-size:8.7px;color:#161616;z-index:3;transform:scaleX(1.0177);transform-origin:0 0;-webkit-text-stroke:0.12px #161616;">bacteria</div>
<div class="t" style="left:1087.88px;top:193.65px;font-size:8.7px;color:#161616;z-index:3;transform:scaleX(1.0404);transform-origin:0 0;-webkit-text-stroke:0.12px #161616;">Move</div>
<div class="t" style="left:1153.26px;top:193.65px;font-size:8.7px;color:#161616;z-index:3;transform:scaleX(0.9846);transform-origin:0 0;-webkit-text-stroke:0.12px #161616;">genus</div>
<div class="t" style="left:76.11px;top:206.55px;font-size:8.7px;font-style:italic;color:#161616;z-index:3;transform:scaleX(1.0297);transform-origin:0 0;-webkit-text-stroke:0.12px #161616;">Caudovirales</div>
<div class="t" style="left:155.83px;top:206.55px;font-size:8.7px;font-style:italic;color:#161616;z-index:3;transform:scaleX(1.0512);transform-origin:0 0;-webkit-text-stroke:0.12px #161616;">Siphoviridae</div>
<div class="t" style="left:224.65px;top:206.55px;font-size:8.7px;font-style:italic;color:#e0150c;z-index:3;transform:scaleX(1.0380);transform-origin:0 0;-webkit-text-stroke:0.12px #e0150c;">Gclasvirinae</div>
<div class="t" style="left:314.33px;top:206.55px;font-size:8.7px;font-style:italic;color:#161616;z-index:3;transform:scaleX(1.0229);transform-origin:0 0;-webkit-text-stroke:0.12px #161616;">Liefievirus</div>
<div class="t" style="left:438.58px;top:206.55px;font-size:8.7px;font-style:italic;color:#e0150c;z-index:3;transform:scaleX(1.0164);transform-origin:0 0;-webkit-text-stroke:0.12px #e0150c;">Liefievirus Paito</div>
<div class="t" style="left:588.86px;top:206.55px;font-size:8.7px;color:#161616;z-index:3;transform:scaleX(1.0571);transform-origin:0 0;-webkit-text-stroke:0.12px #161616;">MH779514.1</div>
<div class="t" style="left:652.90px;top:206.55px;font-size:8.7px;color:#161616;z-index:3;transform:scaleX(1.0113);transform-origin:0 0;-webkit-text-stroke:0.12px #161616;">Mycobacterium phage Paito</div>
<div class="t" style="left:881.23px;top:206.55px;font-size:8.7px;color:#161616;z-index:3;transform:scaleX(0.8610);transform-origin:0 0;-webkit-text-stroke:0.12px #161616;">CG</div>
<div class="t" style="left:949.27px;top:206.55px;font-size:8.7px;color:#161616;z-index:3;transform:scaleX(0.9379);transform-origin:0 0;-webkit-text-stroke:0.12px #161616;">dsDNA</div>
<div class="t" style="left:1020.27px;top:206.55px;font-size:8.7px;color:#161616;z-index:3;transform:scaleX(1.0177);transform-origin:0 0;-webkit-text-stroke:0.12px #161616;">bacteria</div>
<div class="t" style="left:1088.18px;top:206.55px;font-size:8.7px;color:#161616;z-index:3;transform:scaleX(0.9554);transform-origin:0 0;-webkit-text-stroke:0.12px #161616;">Create new</div>
<div class="t" style="left:1153.35px;top:206.55px;font-size:8.7px;color:#161616;z-index:3;transform:scaleX(0.9437);transform-origin:0 0;-webkit-text-stroke:0.12px #161616;">species</div>
<div class="t" style="left:76.11px;top:219.45px;font-size:8.7px;font-style:italic;color:#161616;z-index:3;transform:scaleX(1.0297);transform-origin:0 0;-webkit-text-stroke:0.12px #161616;">Caudovirales</div>
<div class="t" style="left:155.83px;top:219.45px;font-size:8.7px;font-style:italic;color:#161616;z-index:3;transform:scaleX(1.0512);transform-origin:0 0;-webkit-text-stroke:0.12px #161616;">Siphoviridae</div>
<div class="t" style="left:224.65px;top:219.45px;font-size:8.7px;font-style:italic;color:#e0150c;z-index:3;transform:scaleX(1.0380);transform-origin:0 0;-webkit-text-stroke:0.12px #e0150c;">Gclasvirinae</div>
<div class="t" style="left:314.33px;top:219.45px;font-size:8.7px;font-style:italic;color:#161616;z-index:3;transform:scaleX(1.0229);transform-origin:0 0;-webkit-text-stroke:0.12px #161616;">Liefievirus</div>
<div class="t" style="left:438.59px;top:219.45px;font-size:8.7px;font-style:italic;color:#e0150c;z-index:3;transform:scaleX(0.9931);transform-origin:0 0;-webkit-text-stroke:0.12px #e0150c;">Liefievirus Taheera</div>
<div class="t" style="left:588.89px;top:219.45px;font-size:8.7px;color:#161616;z-index:3;transform:scaleX(1.0255);transform-origin:0 0;-webkit-text-stroke:0.12px #161616;">KX641265.1</div>
<div class="t" style="left:652.91px;top:219.45px;font-size:8.7px;color:#161616;z-index:3;transform:scaleX(0.9900);transform-origin:0 0;-webkit-text-stroke:0.12px #161616;">Mycobacterium phage Taheera</div>
<div class="t" style="left:881.23px;top:219.45px;font-size:8.7px;color:#161616;z-index:3;transform:scaleX(0.8610);transform-origin:0 0;-webkit-text-stroke:0.12px #161616;">CG</div>
<div class="t" style="left:949.27px;top:219.45px;font-size:8.7px;color:#161616;z-index:3;transform:scaleX(0.9379);transform-origin:0 0;-webkit-text-stroke:0.12px #161616;">dsDNA</div>
<div class="t" style="left:1020.27px;top:219.45px;font-size:8.7px;color:#161616;z-index:3;transform:scaleX(1.0177);transform-origin:0 0;-webkit-text-stroke:0.12px #161616;">bacteria</div>
<div class="t" style="left:1088.18px;top:219.45px;font-size:8.7px;color:#161616;z-index:3;transform:scaleX(0.9554);transform-origin:0 0;-webkit-text-stroke:0.12px #161616;">Create new</div>
<div class="t" style="left:1153.35px;top:219.45px;font-size:8.7px;color:#161616;z-index:3;transform:scaleX(0.9437);transform-origin:0 0;-webkit-text-stroke:0.12px #161616;">species</div>
<div class="t" style="left:76.11px;top:232.35px;font-size:8.7px;font-style:italic;color:#161616;z-index:3;transform:scaleX(1.0297);transform-origin:0 0;-webkit-text-stroke:0.12px #161616;">Caudovirales</div>
<div class="t" style="left:155.83px;top:232.35px;font-size:8.7px;font-style:italic;color:#161616;z-index:3;transform:scaleX(1.0512);transform-origin:0 0;-webkit-text-stroke:0.12px #161616;">Siphoviridae</div>
<div class="t" style="left:224.65px;top:232.35px;font-size:8.7px;font-style:italic;color:#e0150c;z-index:3;transform:scaleX(1.0380);transform-origin:0 0;-webkit-text-stroke:0.12px #e0150c;">Gclasvirinae</div>
<div class="t" style="left:314.33px;top:232.35px;font-size:8.7px;font-style:italic;color:#161616;z-index:3;transform:scaleX(1.0229);transform-origin:0 0;-webkit-text-stroke:0.12px #161616;">Liefievirus</div>
<div class="t" style="left:438.59px;top:232.35px;font-size:8.7px;font-style:italic;color:#e0150c;z-index:3;transform:scaleX(0.9805);transform-origin:0 0;-webkit-text-stroke:0.12px #e0150c;">Liefievirus Rabbs</div>
<div class="t" style="left:588.86px;top:232.35px;font-size:8.7px;color:#161616;z-index:3;transform:scaleX(1.0675);transform-origin:0 0;-webkit-text-stroke:0.12px #161616;">MK524494.1</div>
<div class="t" style="left:652.91px;top:232.35px;font-size:8.7px;color:#161616;z-index:3;transform:scaleX(0.9934);transform-origin:0 0;-webkit-text-stroke:0.12px #161616;">Mycobacterium phage Rabbs</div>
<div class="t" style="left:881.23px;top:232.35px;font-size:8.7px;color:#161616;z-index:3;transform:scaleX(0.8610);transform-origin:0 0;-webkit-text-stroke:0.12px #161616;">CG</div>
<div class="t" style="left:949.27px;top:232.35px;font-size:8.7px;color:#161616;z-index:3;transform:scaleX(0.9379);transform-origin:0 0;-webkit-text-stroke:0.12px #161616;">dsDNA</div>
<div class="t" style="left:1020.27px;top:232.35px;font-size:8.7px;color:#161616;z-index:3;transform:scaleX(1.0177);transform-origin:0 0;-webkit-text-stroke:0.12px #161616;">bacteria</div>
<div class="t" style="left:1088.18px;top:232.35px;font-size:8.7px;color:#161616;z-index:3;transform:scaleX(0.9554);transform-origin:0 0;-webkit-text-stroke:0.12px #161616;">Create new</div>
<div class="t" style="left:1153.35px;top:232.35px;font-size:8.7px;color:#161616;z-index:3;transform:scaleX(0.9437);transform-origin:0 0;-webkit-text-stroke:0.12px #161616;">species</div>
<div class="t" style="left:76.11px;top:245.25px;font-size:8.7px;font-style:italic;color:#161616;z-index:3;transform:scaleX(1.0297);transform-origin:0 0;-webkit-text-stroke:0.12px #161616;">Caudovirales</div>
<div class="t" style="left:155.83px;top:245.25px;font-size:8.7px;font-style:italic;color:#161616;z-index:3;transform:scaleX(1.0512);transform-origin:0 0;-webkit-text-stroke:0.12px #161616;">Siphoviridae</div>
<div class="t" style="left:224.65px;top:245.25px;font-size:8.7px;font-style:italic;color:#e0150c;z-index:3;transform:scaleX(1.0380);transform-origin:0 0;-webkit-text-stroke:0.12px #e0150c;">Gclasvirinae</div>
<div class="t" style="left:314.33px;top:245.25px;font-size:8.7px;font-style:italic;color:#161616;z-index:3;transform:scaleX(1.0229);transform-origin:0 0;-webkit-text-stroke:0.12px #161616;">Liefievirus</div>
<div class="t" style="left:438.59px;top:245.25px;font-size:8.7px;font-style:italic;color:#e0150c;z-index:3;transform:scaleX(0.9804);transform-origin:0 0;-webkit-text-stroke:0.12px #e0150c;">Liefievirus Grizzly</div>
<div class="t" style="left:588.86px;top:245.25px;font-size:8.7px;color:#161616;z-index:3;transform:scaleX(1.0571);transform-origin:0 0;-webkit-text-stroke:0.12px #161616;">MH779505.1</div>
<div class="t" style="left:652.91px;top:245.25px;font-size:8.7px;color:#161616;z-index:3;-webkit-text-stroke:0.12px #161616;">Mycobacterium phage Grizzly</div>
<div class="t" style="left:881.23px;top:245.25px;font-size:8.7px;color:#161616;z-index:3;transform:scaleX(0.8610);transform-origin:0 0;-webkit-text-stroke:0.12px #161616;">CG</div>
<div class="t" style="left:949.27px;top:245.25px;font-size:8.7px;color:#161616;z-index:3;transform:scaleX(0.9379);transform-origin:0 0;-webkit-text-stroke:0.12px #161616;">dsDNA</div>
<div class="t" style="left:1020.27px;top:245.25px;font-size:8.7px;color:#161616;z-index:3;transform:scaleX(1.0177);transform-origin:0 0;-webkit-text-stroke:0.12px #161616;">bacteria</div>
<div class="t" style="left:1088.18px;top:245.25px;font-size:8.7px;color:#161616;z-index:3;transform:scaleX(0.9554);transform-origin:0 0;-webkit-text-stroke:0.12px #161616;">Create new</div>
<div class="t" style="left:1153.35px;top:245.25px;font-size:8.7px;color:#161616;z-index:3;transform:scaleX(0.9437);transform-origin:0 0;-webkit-text-stroke:0.12px #161616;">species</div>
<div class="t" style="left:76.11px;top:258.15px;font-size:8.7px;font-style:italic;color:#161616;z-index:3;transform:scaleX(1.0297);transform-origin:0 0;-webkit-text-stroke:0.12px #161616;">Caudovirales</div>
<div class="t" style="left:155.83px;top:258.15px;font-size:8.7px;font-style:italic;color:#161616;z-index:3;transform:scaleX(1.0512);transform-origin:0 0;-webkit-text-stroke:0.12px #161616;">Siphoviridae</div>
<div class="t" style="left:224.65px;top:258.15px;font-size:8.7px;font-style:italic;color:#e0150c;z-index:3;transform:scaleX(1.0380);transform-origin:0 0;-webkit-text-stroke:0.12px #e0150c;">Gclasvirinae</div>
<div class="t" style="left:315.04px;top:258.15px;font-size:8.7px;font-style:italic;color:#e0150c;z-index:3;transform:scaleX(1.0204);transform-origin:0 0;-webkit-text-stroke:0.12px #e0150c;">Avocadovirus</div>
<div class="t" style="left:880.95px;top:258.15px;font-size:8.7px;color:#161616;z-index:3;transform:scaleX(0.9317);transform-origin:0 0;-webkit-text-stroke:0.12px #161616;">Please select</div>
<div class="t" style="left:948.95px;top:258.15px;font-size:8.7px;color:#161616;z-index:3;transform:scaleX(0.9317);transform-origin:0 0;-webkit-text-stroke:0.12px #161616;">Please select</div>
<div class="t" style="left:1020.27px;top:258.15px;font-size:8.7px;color:#161616;z-index:3;transform:scaleX(1.0177);transform-origin:0 0;-webkit-text-stroke:0.12px #161616;">bacteria</div>
<div class="t" style="left:1088.18px;top:258.15px;font-size:8.7px;color:#161616;z-index:3;transform:scaleX(0.9554);transform-origin:0 0;-webkit-text-stroke:0.12px #161616;">Create new</div>
<div class="t" style="left:1153.26px;top:258.15px;font-size:8.7px;color:#161616;z-index:3;transform:scaleX(0.9846);transform-origin:0 0;-webkit-text-stroke:0.12px #161616;">genus</div>
<div class="t" style="left:76.11px;top:271.05px;font-size:8.7px;font-style:italic;color:#161616;z-index:3;transform:scaleX(1.0297);transform-origin:0 0;-webkit-text-stroke:0.12px #161616;">Caudovirales</div>
<div class="t" style="left:155.83px;top:271.05px;font-size:8.7px;font-style:italic;color:#161616;z-index:3;transform:scaleX(1.0512);transform-origin:0 0;-webkit-text-stroke:0.12px #161616;">Siphoviridae</div>
<div class="t" style="left:224.65px;top:271.05px;font-size:8.7px;font-style:italic;color:#e0150c;z-index:3;transform:scaleX(1.0380);transform-origin:0 0;-webkit-text-stroke:0.12px #e0150c;">Gclasvirinae</div>
<div class="t" style="left:315.04px;top:271.05px;font-size:8.7px;font-style:italic;color:#e0150c;z-index:3;transform:scaleX(1.0204);transform-origin:0 0;-webkit-text-stroke:0.12px #e0150c;">Avocadovirus</div>
<div class="t" style="left:439.29px;top:271.05px;font-size:8.7px;font-style:italic;color:#e0150c;z-index:3;transform:scaleX(1.0080);transform-origin:0 0;-webkit-text-stroke:0.12px #e0150c;">Avocadovirus Avocado</div>
<div class="t" style="left:588.87px;top:271.05px;font-size:8.7px;color:#161616;z-index:3;transform:scaleX(1.0426);transform-origin:0 0;-webkit-text-stroke:0.12px #161616;">MF141540.1</div>
<div class="t" style="left:652.90px;top:271.05px;font-size:8.7px;color:#161616;z-index:3;transform:scaleX(1.0042);transform-origin:0 0;-webkit-text-stroke:0.12px #161616;">Mycobacterium phage Avocado</div>
<div class="t" style="left:881.23px;top:271.05px;font-size:8.7px;color:#161616;z-index:3;transform:scaleX(0.8610);transform-origin:0 0;-webkit-text-stroke:0.12px #161616;">CG</div>
<div class="t" style="left:949.27px;top:271.05px;font-size:8.7px;color:#161616;z-index:3;transform:scaleX(0.9379);transform-origin:0 0;-webkit-text-stroke:0.12px #161616;">dsDNA</div>
<div class="t" style="left:1020.27px;top:271.05px;font-size:8.7px;color:#161616;z-index:3;transform:scaleX(1.0177);transform-origin:0 0;-webkit-text-stroke:0.12px #161616;">bacteria</div>
<div class="t" style="left:1088.18px;top:271.05px;font-size:8.7px;color:#161616;z-index:3;transform:scaleX(0.9554);transform-origin:0 0;-webkit-text-stroke:0.12px #161616;">Create new</div>
<div class="t" style="left:1153.35px;top:271.05px;font-size:8.7px;color:#161616;z-index:3;transform:scaleX(0.9437);transform-origin:0 0;-webkit-text-stroke:0.12px #161616;">species</div>
<div class="t" style="left:76.11px;top:283.95px;font-size:8.7px;font-style:italic;color:#161616;z-index:3;transform:scaleX(1.0297);transform-origin:0 0;-webkit-text-stroke:0.12px #161616;">Caudovirales</div>
<div class="t" style="left:155.83px;top:283.95px;font-size:8.7px;font-style:italic;color:#161616;z-index:3;transform:scaleX(1.0512);transform-origin:0 0;-webkit-text-stroke:0.12px #161616;">Siphoviridae</div>
<div class="t" style="left:224.65px;top:283.95px;font-size:8.7px;font-style:italic;color:#e0150c;z-index:3;transform:scaleX(1.0380);transform-origin:0 0;-webkit-text-stroke:0.12px #e0150c;">Gclasvirinae</div>
<div class="t" style="left:315.04px;top:283.95px;font-size:8.7px;font-style:italic;color:#e0150c;z-index:3;transform:scaleX(1.0204);transform-origin:0 0;-webkit-text-stroke:0.12px #e0150c;">Avocadovirus</div>
<div class="t" style="left:439.29px;top:283.95px;font-size:8.7px;font-style:italic;color:#e0150c;z-index:3;transform:scaleX(1.0035);transform-origin:0 0;-webkit-text-stroke:0.12px #e0150c;">Avocadovirus FlagStaff</div>
<div class="t" style="left:588.89px;top:283.95px;font-size:8.7px;color:#161616;z-index:3;transform:scaleX(1.0151);transform-origin:0 0;-webkit-text-stroke:0.12px #161616;">KR080197.1</div>
<div class="t" style="left:652.91px;top:283.95px;font-size:8.7px;color:#161616;z-index:3;transform:scaleX(0.9892);transform-origin:0 0;-webkit-text-stroke:0.12px #161616;">Mycobacterium phage FlagStaff</div>
<div class="t" style="left:881.23px;top:283.95px;font-size:8.7px;color:#161616;z-index:3;transform:scaleX(0.8610);transform-origin:0 0;-webkit-text-stroke:0.12px #161616;">CG</div>
<div class="t" style="left:949.27px;top:283.95px;font-size:8.7px;color:#161616;z-index:3;transform:scaleX(0.9379);transform-origin:0 0;-webkit-text-stroke:0.12px #161616;">dsDNA</div>
<div class="t" style="left:1020.27px;top:283.95px;font-size:8.7px;color:#161616;z-index:3;transform:scaleX(1.0177);transform-origin:0 0;-webkit-text-stroke:0.12px #161616;">bacteria</div>
<div class="t" style="left:1088.18px;top:283.95px;font-size:8.7px;color:#161616;z-index:3;transform:scaleX(0.9554);transform-origin:0 0;-webkit-text-stroke:0.12px #161616;">Create new</div>
<div class="t" style="left:1153.35px;top:283.95px;font-size:8.7px;color:#161616;z-index:3;transform:scaleX(0.9437);transform-origin:0 0;-webkit-text-stroke:0.12px #161616;">species</div>
<div class="t" style="left:76.11px;top:296.85px;font-size:8.7px;font-style:italic;color:#161616;z-index:3;transform:scaleX(1.0297);transform-origin:0 0;-webkit-text-stroke:0.12px #161616;">Caudovirales</div>
<div class="t" style="left:155.83px;top:296.85px;font-size:8.7px;font-style:italic;color:#161616;z-index:3;transform:scaleX(1.0512);transform-origin:0 0;-webkit-text-stroke:0.12px #161616;">Siphoviridae</div>
<div class="t" style="left:224.65px;top:296.85px;font-size:8.7px;font-style:italic;color:#e0150c;z-index:3;transform:scaleX(1.0380);transform-origin:0 0;-webkit-text-stroke:0.12px #e0150c;">Gclasvirinae</div>
<div class="t" style="left:315.04px;top:296.85px;font-size:8.7px;font-style:italic;color:#e0150c;z-index:3;transform:scaleX(1.0204);transform-origin:0 0;-webkit-text-stroke:0.12px #e0150c;">Avocadovirus</div>
<div class="t" style="left:439.29px;top:296.85px;font-size:8.7px;font-style:italic;color:#e0150c;z-index:3;transform:scaleX(1.0118);transform-origin:0 0;-webkit-text-stroke:0.12px #e0150c;">Avocadovirus Cambiare</div>
<div class="t" style="left:588.89px;top:296.85px;font-size:8.7px;color:#161616;z-index:3;transform:scaleX(1.0151);transform-origin:0 0;-webkit-text-stroke:0.12px #161616;">KR080198.1</div>
<div class="t" style="left:652.90px;top:296.85px;font-size:8.7px;color:#161616;z-index:3;-webkit-text-stroke:0.12px #161616;">Mycobacterium phage Cambiare</div>
<div class="t" style="left:881.23px;top:296.85px;font-size:8.7px;color:#161616;z-index:3;transform:scaleX(0.8610);transform-origin:0 0;-webkit-text-stroke:0.12px #161616;">CG</div>
<div class="t" style="left:949.27px;top:296.85px;font-size:8.7px;color:#161616;z-index:3;transform:scaleX(0.9379);transform-origin:0 0;-webkit-text-stroke:0.12px #161616;">dsDNA</div>
<div class="t" style="left:1020.27px;top:296.85px;font-size:8.7px;color:#161616;z-index:3;transform:scaleX(1.0177);transform-origin:0 0;-webkit-text-stroke:0.12px #161616;">bacteria</div>
<div class="t" style="left:1088.18px;top:296.85px;font-size:8.7px;color:#161616;z-index:3;transform:scaleX(0.9554);transform-origin:0 0;-webkit-text-stroke:0.12px #161616;">Create new</div>
<div class="t" style="left:1153.35px;top:296.85px;font-size:8.7px;color:#161616;z-index:3;transform:scaleX(0.9437);transform-origin:0 0;-webkit-text-stroke:0.12px #161616;">species</div>
<div class="t" style="left:76.11px;top:309.75px;font-size:8.7px;font-style:italic;color:#161616;z-index:3;transform:scaleX(1.0297);transform-origin:0 0;-webkit-text-stroke:0.12px #161616;">Caudovirales</div>
<div class="t" style="left:155.83px;top:309.75px;font-size:8.7px;font-style:italic;color:#161616;z-index:3;transform:scaleX(1.0512);transform-origin:0 0;-webkit-text-stroke:0.12px #161616;">Siphoviridae</div>
<div class="t" style="left:224.65px;top:309.75px;font-size:8.7px;font-style:italic;color:#e0150c;z-index:3;transform:scaleX(1.0380);transform-origin:0 0;-webkit-text-stroke:0.12px #e0150c;">Gclasvirinae</div>
<div class="t" style="left:315.04px;top:309.75px;font-size:8.7px;font-style:italic;color:#e0150c;z-index:3;transform:scaleX(1.0185);transform-origin:0 0;-webkit-text-stroke:0.12px #e0150c;">Antsirabevirus</div>
<div class="t" style="left:880.95px;top:309.75px;font-size:8.7px;color:#161616;z-index:3;transform:scaleX(0.9317);transform-origin:0 0;-webkit-text-stroke:0.12px #161616;">Please select</div>
<div class="t" style="left:948.95px;top:309.75px;font-size:8.7px;color:#161616;z-index:3;transform:scaleX(0.9317);transform-origin:0 0;-webkit-text-stroke:0.12px #161616;">Please select</div>
<div class="t" style="left:1020.27px;top:309.75px;font-size:8.7px;color:#161616;z-index:3;transform:scaleX(1.0177);transform-origin:0 0;-webkit-text-stroke:0.12px #161616;">bacteria</div>
<div class="t" style="left:1088.18px;top:309.75px;font-size:8.7px;color:#161616;z-index:3;transform:scaleX(0.9554);transform-origin:0 0;-webkit-text-stroke:0.12px #161616;">Create new</div>
<div class="t" style="left:1153.26px;top:309.75px;font-size:8.7px;color:#161616;z-index:3;transform:scaleX(0.9846);transform-origin:0 0;-webkit-text-stroke:0.12px #161616;">genus</div>
<div class="t" style="left:76.11px;top:322.65px;font-size:8.7px;font-style:italic;color:#161616;z-index:3;transform:scaleX(1.0297);transform-origin:0 0;-webkit-text-stroke:0.12px #161616;">Caudovirales</div>
<div class="t" style="left:155.83px;top:322.65px;font-size:8.7px;font-style:italic;color:#161616;z-index:3;transform:scaleX(1.0512);transform-origin:0 0;-webkit-text-stroke:0.12px #161616;">Siphoviridae</div>
<div class="t" style="left:224.65px;top:322.65px;font-size:8.7px;font-style:italic;color:#e0150c;z-index:3;transform:scaleX(1.0380);transform-origin:0 0;-webkit-text-stroke:0.12px #e0150c;">Gclasvirinae</div>
<div class="t" style="left:315.04px;top:322.65px;font-size:8.7px;font-style:italic;color:#e0150c;z-index:3;transform:scaleX(1.0185);transform-origin:0 0;-webkit-text-stroke:0.12px #e0150c;">Antsirabevirus</div>
<div class="t" style="left:439.29px;top:322.65px;font-size:8.7px;font-style:italic;color:#e0150c;z-index:3;transform:scaleX(1.0203);transform-origin:0 0;-webkit-text-stroke:0.12px #e0150c;">Antsirabevirus Antsirabe</div>
<div class="t" style="left:588.86px;top:322.65px;font-size:8.7px;color:#161616;z-index:3;transform:scaleX(1.0571);transform-origin:0 0;-webkit-text-stroke:0.12px #161616;">MN234183.1</div>
<div class="t" style="left:652.89px;top:322.65px;font-size:8.7px;color:#161616;z-index:3;transform:scaleX(1.0139);transform-origin:0 0;-webkit-text-stroke:0.12px #161616;">Mycobacterium phage Antsirabe</div>
<div class="t" style="left:881.23px;top:322.65px;font-size:8.7px;color:#161616;z-index:3;transform:scaleX(0.8610);transform-origin:0 0;-webkit-text-stroke:0.12px #161616;">CG</div>
<div class="t" style="left:949.27px;top:322.65px;font-size:8.7px;color:#161616;z-index:3;transform:scaleX(0.9379);transform-origin:0 0;-webkit-text-stroke:0.12px #161616;">dsDNA</div>
<div class="t" style="left:1020.27px;top:322.65px;font-size:8.7px;color:#161616;z-index:3;transform:scaleX(1.0177);transform-origin:0 0;-webkit-text-stroke:0.12px #161616;">bacteria</div>
<div class="t" style="left:1088.18px;top:322.65px;font-size:8.7px;color:#161616;z-index:3;transform:scaleX(0.9554);transform-origin:0 0;-webkit-text-stroke:0.12px #161616;">Create new</div>
<div class="t" style="left:1153.35px;top:322.65px;font-size:8.7px;color:#161616;z-index:3;transform:scaleX(0.9437);transform-origin:0 0;-webkit-text-stroke:0.12px #161616;">species</div>
<div class="t" style="left:76.11px;top:335.55px;font-size:8.7px;font-style:italic;color:#161616;z-index:3;transform:scaleX(1.0297);transform-origin:0 0;-webkit-text-stroke:0.12px #161616;">Caudovirales</div>
<div class="t" style="left:155.83px;top:335.55px;font-size:8.7px;font-style:italic;color:#161616;z-index:3;transform:scaleX(1.0512);transform-origin:0 0;-webkit-text-stroke:0.12px #161616;">Siphoviridae</div>
<div class="t" style="left:224.65px;top:335.55px;font-size:8.7px;font-style:italic;color:#e0150c;z-index:3;transform:scaleX(1.0380);transform-origin:0 0;-webkit-text-stroke:0.12px #e0150c;">Gclasvirinae</div>
<div class="t" style="left:314.60px;top:335.55px;font-size:8.7px;font-style:italic;color:#e0150c;z-index:3;transform:scaleX(1.0358);transform-origin:0 0;-webkit-text-stroke:0.12px #e0150c;">Jolieduovirus</div>
<div class="t" style="left:880.95px;top:335.55px;font-size:8.7px;color:#161616;z-index:3;transform:scaleX(0.9317);transform-origin:0 0;-webkit-text-stroke:0.12px #161616;">Please select</div>
<div class="t" style="left:948.95px;top:335.55px;font-size:8.7px;color:#161616;z-index:3;transform:scaleX(0.9317);transform-origin:0 0;-webkit-text-stroke:0.12px #161616;">Please select</div>
<div class="t" style="left:1020.27px;top:335.55px;font-size:8.7px;color:#161616;z-index:3;transform:scaleX(1.0177);transform-origin:0 0;-webkit-text-stroke:0.12px #161616;">bacteria</div>
<div class="t" style="left:1088.18px;top:335.55px;font-size:8.7px;color:#161616;z-index:3;transform:scaleX(0.9554);transform-origin:0 0;-webkit-text-stroke:0.12px #161616;">Create new</div>
<div class="t" style="left:1153.26px;top:335.55px;font-size:8.7px;color:#161616;z-index:3;transform:scaleX(0.9846);transform-origin:0 0;-webkit-text-stroke:0.12px #161616;">genus</div>
<div class="t" style="left:76.11px;top:348.45px;font-size:8.7px;font-style:italic;color:#161616;z-index:3;transform:scaleX(1.0297);transform-origin:0 0;-webkit-text-stroke:0.12px #161616;">Caudovirales</div>
<div class="t" style="left:155.83px;top:348.45px;font-size:8.7px;font-style:italic;color:#161616;z-index:3;transform:scaleX(1.0512);transform-origin:0 0;-webkit-text-stroke:0.12px #161616;">Siphoviridae</div>
<div class="t" style="left:224.65px;top:348.45px;font-size:8.7px;font-style:italic;color:#e0150c;z-index:3;transform:scaleX(1.0380);transform-origin:0 0;-webkit-text-stroke:0.12px #e0150c;">Gclasvirinae</div>
<div class="t" style="left:314.60px;top:348.45px;font-size:8.7px;font-style:italic;color:#e0150c;z-index:3;transform:scaleX(1.0358);transform-origin:0 0;-webkit-text-stroke:0.12px #e0150c;">Jolieduovirus</div>
<div class="t" style="left:438.85px;top:348.45px;font-size:8.7px;font-style:italic;color:#e0150c;z-index:3;transform:scaleX(1.0109);transform-origin:0 0;-webkit-text-stroke:0.12px #e0150c;">Jolieduovirus Jolie2</div>
<div class="t" style="left:588.89px;top:348.45px;font-size:8.7px;color:#161616;z-index:3;transform:scaleX(1.0259);transform-origin:0 0;-webkit-text-stroke:0.12px #161616;">KJ410133.1</div>
<div class="t" style="left:652.90px;top:348.45px;font-size:8.7px;color:#161616;z-index:3;-webkit-text-stroke:0.12px #161616;">Mycobacterium phage Jolie2</div>
<div class="t" style="left:881.23px;top:348.45px;font-size:8.7px;color:#161616;z-index:3;transform:scaleX(0.8610);transform-origin:0 0;-webkit-text-stroke:0.12px #161616;">CG</div>
<div class="t" style="left:949.27px;top:348.45px;font-size:8.7px;color:#161616;z-index:3;transform:scaleX(0.9379);transform-origin:0 0;-webkit-text-stroke:0.12px #161616;">dsDNA</div>
<div class="t" style="left:1020.27px;top:348.45px;font-size:8.7px;color:#161616;z-index:3;transform:scaleX(1.0177);transform-origin:0 0;-webkit-text-stroke:0.12px #161616;">bacteria</div>
<div class="t" style="left:1088.18px;top:348.45px;font-size:8.7px;color:#161616;z-index:3;transform:scaleX(0.9554);transform-origin:0 0;-webkit-text-stroke:0.12px #161616;">Create new</div>
<div class="t" style="left:1153.35px;top:348.45px;font-size:8.7px;color:#161616;z-index:3;transform:scaleX(0.9437);transform-origin:0 0;-webkit-text-stroke:0.12px #161616;">species</div>
<div class="t" style="left:76.11px;top:361.35px;font-size:8.7px;font-style:italic;color:#161616;z-index:3;transform:scaleX(1.0297);transform-origin:0 0;-webkit-text-stroke:0.12px #161616;">Caudovirales</div>
<div class="t" style="left:155.83px;top:361.35px;font-size:8.7px;font-style:italic;color:#161616;z-index:3;transform:scaleX(1.0512);transform-origin:0 0;-webkit-text-stroke:0.12px #161616;">Siphoviridae</div>
<div class="t" style="left:224.65px;top:361.35px;font-size:8.7px;font-style:italic;color:#e0150c;z-index:3;transform:scaleX(1.0380);transform-origin:0 0;-webkit-text-stroke:0.12px #e0150c;">Gclasvirinae</div>
<div class="t" style="left:314.60px;top:361.35px;font-size:8.7px;font-style:italic;color:#e0150c;z-index:3;transform:scaleX(1.0358);transform-origin:0 0;-webkit-text-stroke:0.12px #e0150c;">Jolieduovirus</div>
<div class="t" style="left:438.85px;top:361.35px;font-size:8.7px;font-style:italic;color:#e0150c;z-index:3;transform:scaleX(1.0348);transform-origin:0 0;-webkit-text-stroke:0.12px #e0150c;">Jolieduovirus Mercurio</div>
<div class="t" style="left:588.86px;top:361.35px;font-size:8.7px;color:#161616;z-index:3;transform:scaleX(1.0571);transform-origin:0 0;-webkit-text-stroke:0.12px #161616;">MN234219.1</div>
<div class="t" style="left:652.89px;top:361.35px;font-size:8.7px;color:#161616;z-index:3;transform:scaleX(1.0240);transform-origin:0 0;-webkit-text-stroke:0.12px #161616;">Mycobacterium phage Mercurio</div>
<div class="t" style="left:881.23px;top:361.35px;font-size:8.7px;color:#161616;z-index:3;transform:scaleX(0.8610);transform-origin:0 0;-webkit-text-stroke:0.12px #161616;">CG</div>
<div class="t" style="left:949.27px;top:361.35px;font-size:8.7px;color:#161616;z-index:3;transform:scaleX(0.9379);transform-origin:0 0;-webkit-text-stroke:0.12px #161616;">dsDNA</div>
<div class="t" style="left:1020.27px;top:361.35px;font-size:8.7px;color:#161616;z-index:3;transform:scaleX(1.0177);transform-origin:0 0;-webkit-text-stroke:0.12px #161616;">bacteria</div>
<div class="t" style="left:1088.18px;top:361.35px;font-size:8.7px;color:#161616;z-index:3;transform:scaleX(0.9554);transform-origin:0 0;-webkit-text-stroke:0.12px #161616;">Create new</div>
<div class="t" style="left:1153.35px;top:361.35px;font-size:8.7px;color:#161616;z-index:3;transform:scaleX(0.9437);transform-origin:0 0;-webkit-text-stroke:0.12px #161616;">species</div>
<div class="t" style="left:76.11px;top:374.25px;font-size:8.7px;font-style:italic;color:#161616;z-index:3;transform:scaleX(1.0297);transform-origin:0 0;-webkit-text-stroke:0.12px #161616;">Caudovirales</div>
<div class="t" style="left:155.83px;top:374.25px;font-size:8.7px;font-style:italic;color:#161616;z-index:3;transform:scaleX(1.0512);transform-origin:0 0;-webkit-text-stroke:0.12px #161616;">Siphoviridae</div>
<div class="t" style="left:224.65px;top:374.25px;font-size:8.7px;font-style:italic;color:#e0150c;z-index:3;transform:scaleX(1.0380);transform-origin:0 0;-webkit-text-stroke:0.12px #e0150c;">Gclasvirinae</div>
<div class="t" style="left:314.60px;top:374.25px;font-size:8.7px;font-style:italic;color:#e0150c;z-index:3;transform:scaleX(1.0358);transform-origin:0 0;-webkit-text-stroke:0.12px #e0150c;">Jolieduovirus</div>
<div class="t" style="left:438.85px;top:374.25px;font-size:8.7px;font-style:italic;color:#e0150c;z-index:3;transform:scaleX(1.0189);transform-origin:0 0;-webkit-text-stroke:0.12px #e0150c;">Jolieduovirus Lemuria</div>
<div class="t" style="left:588.86px;top:374.25px;font-size:8.7px;color:#161616;z-index:3;transform:scaleX(1.0571);transform-origin:0 0;-webkit-text-stroke:0.12px #161616;">MN234185.1</div>
<div class="t" style="left:652.90px;top:374.25px;font-size:8.7px;color:#161616;z-index:3;transform:scaleX(1.0080);transform-origin:0 0;-webkit-text-stroke:0.12px #161616;">Mycobacterium phage Lemuria</div>
<div class="t" style="left:881.23px;top:374.25px;font-size:8.7px;color:#161616;z-index:3;transform:scaleX(0.8610);transform-origin:0 0;-webkit-text-stroke:0.12px #161616;">CG</div>
<div class="t" style="left:949.27px;top:374.25px;font-size:8.7px;color:#161616;z-index:3;transform:scaleX(0.9379);transform-origin:0 0;-webkit-text-stroke:0.12px #161616;">dsDNA</div>
<div class="t" style="left:1020.27px;top:374.25px;font-size:8.7px;color:#161616;z-index:3;transform:scaleX(1.0177);transform-origin:0 0;-webkit-text-stroke:0.12px #161616;">bacteria</div>
<div class="t" style="left:1088.18px;top:374.25px;font-size:8.7px;color:#161616;z-index:3;transform:scaleX(0.9554);transform-origin:0 0;-webkit-text-stroke:0.12px #161616;">Create new</div>
<div class="t" style="left:1153.35px;top:374.25px;font-size:8.7px;color:#161616;z-index:3;transform:scaleX(0.9437);transform-origin:0 0;-webkit-text-stroke:0.12px #161616;">species</div>
<div class="t" style="left:76.11px;top:387.15px;font-size:8.7px;font-style:italic;color:#161616;z-index:3;transform:scaleX(1.0297);transform-origin:0 0;-webkit-text-stroke:0.12px #161616;">Caudovirales</div>
<div class="t" style="left:155.83px;top:387.15px;font-size:8.7px;font-style:italic;color:#161616;z-index:3;transform:scaleX(1.0512);transform-origin:0 0;-webkit-text-stroke:0.12px #161616;">Siphoviridae</div>
<div class="t" style="left:224.65px;top:387.15px;font-size:8.7px;font-style:italic;color:#e0150c;z-index:3;transform:scaleX(1.0380);transform-origin:0 0;-webkit-text-stroke:0.12px #e0150c;">Gclasvirinae</div>
<div class="t" style="left:314.33px;top:387.15px;font-size:8.7px;font-style:italic;color:#e0150c;z-index:3;transform:scaleX(1.0354);transform-origin:0 0;-webkit-text-stroke:0.12px #e0150c;">Pinnievirus</div>
<div class="t" style="left:880.95px;top:387.15px;font-size:8.7px;color:#161616;z-index:3;transform:scaleX(0.9317);transform-origin:0 0;-webkit-text-stroke:0.12px #161616;">Please select</div>
<div class="t" style="left:948.95px;top:387.15px;font-size:8.7px;color:#161616;z-index:3;transform:scaleX(0.9317);transform-origin:0 0;-webkit-text-stroke:0.12px #161616;">Please select</div>
<div class="t" style="left:1020.27px;top:387.15px;font-size:8.7px;color:#161616;z-index:3;transform:scaleX(1.0177);transform-origin:0 0;-webkit-text-stroke:0.12px #161616;">bacteria</div>
<div class="t" style="left:1088.18px;top:387.15px;font-size:8.7px;color:#161616;z-index:3;transform:scaleX(0.9554);transform-origin:0 0;-webkit-text-stroke:0.12px #161616;">Create new</div>
<div class="t" style="left:1153.26px;top:387.15px;font-size:8.7px;color:#161616;z-index:3;transform:scaleX(0.9846);transform-origin:0 0;-webkit-text-stroke:0.12px #161616;">genus</div>
<div class="t" style="left:76.11px;top:400.05px;font-size:8.7px;font-style:italic;color:#161616;z-index:3;transform:scaleX(1.0297);transform-origin:0 0;-webkit-text-stroke:0.12px #161616;">Caudovirales</div>
<div class="t" style="left:155.83px;top:400.05px;font-size:8.7px;font-style:italic;color:#161616;z-index:3;transform:scaleX(1.0512);transform-origin:0 0;-webkit-text-stroke:0.12px #161616;">Siphoviridae</div>
<div class="t" style="left:224.65px;top:400.05px;font-size:8.7px;font-style:italic;color:#e0150c;z-index:3;transform:scaleX(1.0380);transform-origin:0 0;-webkit-text-stroke:0.12px #e0150c;">Gclasvirinae</div>
<div class="t" style="left:314.33px;top:400.05px;font-size:8.7px;font-style:italic;color:#e0150c;z-index:3;transform:scaleX(1.0354);transform-origin:0 0;-webkit-text-stroke:0.12px #e0150c;">Pinnievirus</div>
<div class="t" style="left:438.58px;top:400.05px;font-size:8.7px;font-style:italic;color:#e0150c;z-index:3;transform:scaleX(1.0204);transform-origin:0 0;-webkit-text-stroke:0.12px #e0150c;">Pinnievirus Pinnie</div>
<div class="t" style="left:588.86px;top:400.05px;font-size:8.7px;color:#161616;z-index:3;transform:scaleX(1.0675);transform-origin:0 0;-webkit-text-stroke:0.12px #161616;">MK494105.1</div>
<div class="t" style="left:652.89px;top:400.05px;font-size:8.7px;color:#161616;z-index:3;transform:scaleX(1.0162);transform-origin:0 0;-webkit-text-stroke:0.12px #161616;">Mycobacterium phage Pinnie</div>
<div class="t" style="left:881.23px;top:400.05px;font-size:8.7px;color:#161616;z-index:3;transform:scaleX(0.8610);transform-origin:0 0;-webkit-text-stroke:0.12px #161616;">CG</div>
<div class="t" style="left:949.27px;top:400.05px;font-size:8.7px;color:#161616;z-index:3;transform:scaleX(0.9379);transform-origin:0 0;-webkit-text-stroke:0.12px #161616;">dsDNA</div>
<div class="t" style="left:1020.27px;top:400.05px;font-size:8.7px;color:#161616;z-index:3;transform:scaleX(1.0177);transform-origin:0 0;-webkit-text-stroke:0.12px #161616;">bacteria</div>
<div class="t" style="left:1088.18px;top:400.05px;font-size:8.7px;color:#161616;z-index:3;transform:scaleX(0.9554);transform-origin:0 0;-webkit-text-stroke:0.12px #161616;">Create new</div>
<div class="t" style="left:1153.35px;top:400.05px;font-size:8.7px;color:#161616;z-index:3;transform:scaleX(0.9437);transform-origin:0 0;-webkit-text-stroke:0.12px #161616;">species</div>
<div class="t" style="left:76.11px;top:412.95px;font-size:8.7px;font-style:italic;color:#161616;z-index:3;transform:scaleX(1.0297);transform-origin:0 0;-webkit-text-stroke:0.12px #161616;">Caudovirales</div>
<div class="t" style="left:155.83px;top:412.95px;font-size:8.7px;font-style:italic;color:#161616;z-index:3;transform:scaleX(1.0512);transform-origin:0 0;-webkit-text-stroke:0.12px #161616;">Siphoviridae</div>
<div class="t" style="left:224.65px;top:412.95px;font-size:8.7px;font-style:italic;color:#e0150c;z-index:3;transform:scaleX(1.0380);transform-origin:0 0;-webkit-text-stroke:0.12px #e0150c;">Gclasvirinae</div>
<div class="t" style="left:314.33px;top:412.95px;font-size:8.7px;font-style:italic;color:#e0150c;z-index:3;transform:scaleX(1.0354);transform-origin:0 0;-webkit-text-stroke:0.12px #e0150c;">Pinnievirus</div>
<div class="t" style="left:438.58px;top:412.95px;font-size:8.7px;font-style:italic;color:#e0150c;z-index:3;transform:scaleX(1.0322);transform-origin:0 0;-webkit-text-stroke:0.12px #e0150c;">Pinnievirus Moorethemaryer</div>
<div class="t" style="left:588.89px;top:412.95px;font-size:8.7px;color:#161616;z-index:3;transform:scaleX(1.0151);transform-origin:0 0;-webkit-text-stroke:0.12px #161616;">KR080202.1</div>
<div class="t" style="left:652.92px;top:412.95px;font-size:8.7px;color:#161616;z-index:3;transform:scaleX(0.9766);transform-origin:0 0;-webkit-text-stroke:0.12px #161616;">Mycobacterium phage MOOREtheMARYer</div>
<div class="t" style="left:881.23px;top:412.95px;font-size:8.7px;color:#161616;z-index:3;transform:scaleX(0.8610);transform-origin:0 0;-webkit-text-stroke:0.12px #161616;">CG</div>
<div class="t" style="left:949.27px;top:412.95px;font-size:8.7px;color:#161616;z-index:3;transform:scaleX(0.9379);transform-origin:0 0;-webkit-text-stroke:0.12px #161616;">dsDNA</div>
<div class="t" style="left:1020.27px;top:412.95px;font-size:8.7px;color:#161616;z-index:3;transform:scaleX(1.0177);transform-origin:0 0;-webkit-text-stroke:0.12px #161616;">bacteria</div>
<div class="t" style="left:1088.18px;top:412.95px;font-size:8.7px;color:#161616;z-index:3;transform:scaleX(0.9554);transform-origin:0 0;-webkit-text-stroke:0.12px #161616;">Create new</div>
<div class="t" style="left:1153.35px;top:412.95px;font-size:8.7px;color:#161616;z-index:3;transform:scaleX(0.9437);transform-origin:0 0;-webkit-text-stroke:0.12px #161616;">species</div>
<div class="t" style="left:880.95px;top:425.85px;font-size:8.7px;color:#161616;z-index:3;transform:scaleX(0.9317);transform-origin:0 0;-webkit-text-stroke:0.12px #161616;">Please select</div>
<div class="t" style="left:948.95px;top:425.85px;font-size:8.7px;color:#161616;z-index:3;transform:scaleX(0.9317);transform-origin:0 0;-webkit-text-stroke:0.12px #161616;">Please select</div>
<div class="t" style="left:1020.20px;top:425.85px;font-size:8.7px;color:#161616;z-index:3;transform:scaleX(0.9317);transform-origin:0 0;-webkit-text-stroke:0.12px #161616;">Please select</div>
<div class="t" style="left:1087.95px;top:425.85px;font-size:8.7px;color:#161616;z-index:3;transform:scaleX(0.9317);transform-origin:0 0;-webkit-text-stroke:0.12px #161616;">Please select</div>
<div class="t" style="left:1152.95px;top:425.85px;font-size:8.7px;color:#161616;z-index:3;transform:scaleX(0.9317);transform-origin:0 0;-webkit-text-stroke:0.12px #161616;">Please select</div>
<div class="t" style="left:880.95px;top:438.75px;font-size:8.7px;color:#161616;z-index:3;transform:scaleX(0.9317);transform-origin:0 0;-webkit-text-stroke:0.12px #161616;">Please select</div>
<div class="t" style="left:948.95px;top:438.75px;font-size:8.7px;color:#161616;z-index:3;transform:scaleX(0.9317);transform-origin:0 0;-webkit-text-stroke:0.12px #161616;">Please select</div>
<div class="t" style="left:1020.20px;top:438.75px;font-size:8.7px;color:#161616;z-index:3;transform:scaleX(0.9317);transform-origin:0 0;-webkit-text-stroke:0.12px #161616;">Please select</div>
<div class="t" style="left:1087.95px;top:438.75px;font-size:8.7px;color:#161616;z-index:3;transform:scaleX(0.9317);transform-origin:0 0;-webkit-text-stroke:0.12px #161616;">Please select</div>
<div class="t" style="left:1152.95px;top:438.75px;font-size:8.7px;color:#161616;z-index:3;transform:scaleX(0.9317);transform-origin:0 0;-webkit-text-stroke:0.12px #161616;">Please select</div>
<div class="t" style="left:880.95px;top:451.65px;font-size:8.7px;color:#161616;z-index:3;transform:scaleX(0.9317);transform-origin:0 0;-webkit-text-stroke:0.12px #161616;">Please select</div>
<div class="t" style="left:948.95px;top:451.65px;font-size:8.7px;color:#161616;z-index:3;transform:scaleX(0.9317);transform-origin:0 0;-webkit-text-stroke:0.12px #161616;">Please select</div>
<div class="t" style="left:1020.20px;top:451.65px;font-size:8.7px;color:#161616;z-index:3;transform:scaleX(0.9317);transform-origin:0 0;-webkit-text-stroke:0.12px #161616;">Please select</div>
<div class="t" style="left:1087.95px;top:451.65px;font-size:8.7px;color:#161616;z-index:3;transform:scaleX(0.9317);transform-origin:0 0;-webkit-text-stroke:0.12px #161616;">Please select</div>
<div class="t" style="left:1152.95px;top:451.65px;font-size:8.7px;color:#161616;z-index:3;transform:scaleX(0.9317);transform-origin:0 0;-webkit-text-stroke:0.12px #161616;">Please select</div>
<div class="t" style="left:880.95px;top:464.55px;font-size:8.7px;color:#161616;z-index:3;transform:scaleX(0.9317);transform-origin:0 0;-webkit-text-stroke:0.12px #161616;">Please select</div>
<div class="t" style="left:948.95px;top:464.55px;font-size:8.7px;color:#161616;z-index:3;transform:scaleX(0.9317);transform-origin:0 0;-webkit-text-stroke:0.12px #161616;">Please select</div>
<div class="t" style="left:1020.20px;top:464.55px;font-size:8.7px;color:#161616;z-index:3;transform:scaleX(0.9317);transform-origin:0 0;-webkit-text-stroke:0.12px #161616;">Please select</div>
<div class="t" style="left:1087.95px;top:464.55px;font-size:8.7px;color:#161616;z-index:3;transform:scaleX(0.9317);transform-origin:0 0;-webkit-text-stroke:0.12px #161616;">Please select</div>
<div class="t" style="left:1152.95px;top:464.55px;font-size:8.7px;color:#161616;z-index:3;transform:scaleX(0.9317);transform-origin:0 0;-webkit-text-stroke:0.12px #161616;">Please select</div>
<div class="t" style="left:880.95px;top:477.45px;font-size:8.7px;color:#161616;z-index:3;transform:scaleX(0.9317);transform-origin:0 0;-webkit-text-stroke:0.12px #161616;">Please select</div>
<div class="t" style="left:948.95px;top:477.45px;font-size:8.7px;color:#161616;z-index:3;transform:scaleX(0.9317);transform-origin:0 0;-webkit-text-stroke:0.12px #161616;">Please select</div>
<div class="t" style="left:1020.20px;top:477.45px;font-size:8.7px;color:#161616;z-index:3;transform:scaleX(0.9317);transform-origin:0 0;-webkit-text-stroke:0.12px #161616;">Please select</div>
<div class="t" style="left:1087.95px;top:477.45px;font-size:8.7px;color:#161616;z-index:3;transform:scaleX(0.9317);transform-origin:0 0;-webkit-text-stroke:0.12px #161616;">Please select</div>
<div class="t" style="left:1152.95px;top:477.45px;font-size:8.7px;color:#161616;z-index:3;transform:scaleX(0.9317);transform-origin:0 0;-webkit-text-stroke:0.12px #161616;">Please select</div>
<div class="t" style="left:880.95px;top:490.35px;font-size:8.7px;color:#161616;z-index:3;transform:scaleX(0.9317);transform-origin:0 0;-webkit-text-stroke:0.12px #161616;">Please select</div>
<div class="t" style="left:948.95px;top:490.35px;font-size:8.7px;color:#161616;z-index:3;transform:scaleX(0.9317);transform-origin:0 0;-webkit-text-stroke:0.12px #161616;">Please select</div>
<div class="t" style="left:1020.20px;top:490.35px;font-size:8.7px;color:#161616;z-index:3;transform:scaleX(0.9317);transform-origin:0 0;-webkit-text-stroke:0.12px #161616;">Please select</div>
<div class="t" style="left:1087.95px;top:490.35px;font-size:8.7px;color:#161616;z-index:3;transform:scaleX(0.9317);transform-origin:0 0;-webkit-text-stroke:0.12px #161616;">Please select</div>
<div class="t" style="left:1152.95px;top:490.35px;font-size:8.7px;color:#161616;z-index:3;transform:scaleX(0.9317);transform-origin:0 0;-webkit-text-stroke:0.12px #161616;">Please select</div>
<div class="t" style="left:880.95px;top:503.25px;font-size:8.7px;color:#161616;z-index:3;transform:scaleX(0.9317);transform-origin:0 0;-webkit-text-stroke:0.12px #161616;">Please select</div>
<div class="t" style="left:948.95px;top:503.25px;font-size:8.7px;color:#161616;z-index:3;transform:scaleX(0.9317);transform-origin:0 0;-webkit-text-stroke:0.12px #161616;">Please select</div>
<div class="t" style="left:1020.20px;top:503.25px;font-size:8.7px;color:#161616;z-index:3;transform:scaleX(0.9317);transform-origin:0 0;-webkit-text-stroke:0.12px #161616;">Please select</div>
<div class="t" style="left:1087.95px;top:503.25px;font-size:8.7px;color:#161616;z-index:3;transform:scaleX(0.9317);transform-origin:0 0;-webkit-text-stroke:0.12px #161616;">Please select</div>
<div class="t" style="left:1152.95px;top:503.25px;font-size:8.7px;color:#161616;z-index:3;transform:scaleX(0.9317);transform-origin:0 0;-webkit-text-stroke:0.12px #161616;">Please select</div>
<div class="t" style="left:880.95px;top:516.15px;font-size:8.7px;color:#161616;z-index:3;transform:scaleX(0.9317);transform-origin:0 0;-webkit-text-stroke:0.12px #161616;">Please select</div>
<div class="t" style="left:948.95px;top:516.15px;font-size:8.7px;color:#161616;z-index:3;transform:scaleX(0.9317);transform-origin:0 0;-webkit-text-stroke:0.12px #161616;">Please select</div>
<div class="t" style="left:1020.20px;top:516.15px;font-size:8.7px;color:#161616;z-index:3;transform:scaleX(0.9317);transform-origin:0 0;-webkit-text-stroke:0.12px #161616;">Please select</div>
<div class="t" style="left:1087.95px;top:516.15px;font-size:8.7px;color:#161616;z-index:3;transform:scaleX(0.9317);transform-origin:0 0;-webkit-text-stroke:0.12px #161616;">Please select</div>
<div class="t" style="left:1152.95px;top:516.15px;font-size:8.7px;color:#161616;z-index:3;transform:scaleX(0.9317);transform-origin:0 0;-webkit-text-stroke:0.12px #161616;">Please select</div>
<div class="t" style="left:880.95px;top:529.05px;font-size:8.7px;color:#161616;z-index:3;transform:scaleX(0.9317);transform-origin:0 0;-webkit-text-stroke:0.12px #161616;">Please select</div>
<div class="t" style="left:948.95px;top:529.05px;font-size:8.7px;color:#161616;z-index:3;transform:scaleX(0.9317);transform-origin:0 0;-webkit-text-stroke:0.12px #161616;">Please select</div>
<div class="t" style="left:1020.20px;top:529.05px;font-size:8.7px;color:#161616;z-index:3;transform:scaleX(0.9317);transform-origin:0 0;-webkit-text-stroke:0.12px #161616;">Please select</div>
<div class="t" style="left:1087.95px;top:529.05px;font-size:8.7px;color:#161616;z-index:3;transform:scaleX(0.9317);transform-origin:0 0;-webkit-text-stroke:0.12px #161616;">Please select</div>
<div class="t" style="left:1152.95px;top:529.05px;font-size:8.7px;color:#161616;z-index:3;transform:scaleX(0.9317);transform-origin:0 0;-webkit-text-stroke:0.12px #161616;">Please select</div>
<div class="t" style="left:880.95px;top:541.95px;font-size:8.7px;color:#161616;z-index:3;transform:scaleX(0.9317);transform-origin:0 0;-webkit-text-stroke:0.12px #161616;">Please select</div>
<div class="t" style="left:948.95px;top:541.95px;font-size:8.7px;color:#161616;z-index:3;transform:scaleX(0.9317);transform-origin:0 0;-webkit-text-stroke:0.12px #161616;">Please select</div>
<div class="t" style="left:1020.20px;top:541.95px;font-size:8.7px;color:#161616;z-index:3;transform:scaleX(0.9317);transform-origin:0 0;-webkit-text-stroke:0.12px #161616;">Please select</div>
<div class="t" style="left:1087.95px;top:541.95px;font-size:8.7px;color:#161616;z-index:3;transform:scaleX(0.9317);transform-origin:0 0;-webkit-text-stroke:0.12px #161616;">Please select</div>
<div class="t" style="left:1152.95px;top:541.95px;font-size:8.7px;color:#161616;z-index:3;transform:scaleX(0.9317);transform-origin:0 0;-webkit-text-stroke:0.12px #161616;">Please select</div>
<div class="t" style="left:880.95px;top:554.85px;font-size:8.7px;color:#161616;z-index:3;transform:scaleX(0.9317);transform-origin:0 0;-webkit-text-stroke:0.12px #161616;">Please select</div>
<div class="t" style="left:948.95px;top:554.85px;font-size:8.7px;color:#161616;z-index:3;transform:scaleX(0.9317);transform-origin:0 0;-webkit-text-stroke:0.12px #161616;">Please select</div>
<div class="t" style="left:1020.20px;top:554.85px;font-size:8.7px;color:#161616;z-index:3;transform:scaleX(0.9317);transform-origin:0 0;-webkit-text-stroke:0.12px #161616;">Please select</div>
<div class="t" style="left:1087.95px;top:554.85px;font-size:8.7px;color:#161616;z-index:3;transform:scaleX(0.9317);transform-origin:0 0;-webkit-text-stroke:0.12px #161616;">Please select</div>
<div class="t" style="left:1152.95px;top:554.85px;font-size:8.7px;color:#161616;z-index:3;transform:scaleX(0.9317);transform-origin:0 0;-webkit-text-stroke:0.12px #161616;">Please select</div>
<div class="t" style="left:880.95px;top:567.75px;font-size:8.7px;color:#161616;z-index:3;transform:scaleX(0.9317);transform-origin:0 0;-webkit-text-stroke:0.12px #161616;">Please select</div>
<div class="t" style="left:948.95px;top:567.75px;font-size:8.7px;color:#161616;z-index:3;transform:scaleX(0.9317);transform-origin:0 0;-webkit-text-stroke:0.12px #161616;">Please select</div>
<div class="t" style="left:1020.20px;top:567.75px;font-size:8.7px;color:#161616;z-index:3;transform:scaleX(0.9317);transform-origin:0 0;-webkit-text-stroke:0.12px #161616;">Please select</div>
<div class="t" style="left:1087.95px;top:567.75px;font-size:8.7px;color:#161616;z-index:3;transform:scaleX(0.9317);transform-origin:0 0;-webkit-text-stroke:0.12px #161616;">Please select</div>
<div class="t" style="left:1152.95px;top:567.75px;font-size:8.7px;color:#161616;z-index:3;transform:scaleX(0.9317);transform-origin:0 0;-webkit-text-stroke:0.12px #161616;">Please select</div>
<div class="t" style="left:880.95px;top:580.65px;font-size:8.7px;color:#161616;z-index:3;transform:scaleX(0.9317);transform-origin:0 0;-webkit-text-stroke:0.12px #161616;">Please select</div>
<div class="t" style="left:948.95px;top:580.65px;font-size:8.7px;color:#161616;z-index:3;transform:scaleX(0.9317);transform-origin:0 0;-webkit-text-stroke:0.12px #161616;">Please select</div>
<div class="t" style="left:1020.20px;top:580.65px;font-size:8.7px;color:#161616;z-index:3;transform:scaleX(0.9317);transform-origin:0 0;-webkit-text-stroke:0.12px #161616;">Please select</div>
<div class="t" style="left:1087.95px;top:580.65px;font-size:8.7px;color:#161616;z-index:3;transform:scaleX(0.9317);transform-origin:0 0;-webkit-text-stroke:0.12px #161616;">Please select</div>
<div class="t" style="left:1152.95px;top:580.65px;font-size:8.7px;color:#161616;z-index:3;transform:scaleX(0.9317);transform-origin:0 0;-webkit-text-stroke:0.12px #161616;">Please select</div>
<div style="position:absolute;left:48.00px;top:584.40px;width:1184.00px;height:13.00px;background:#f8f8f8;z-index:2;"></div>
<div style="position:absolute;left:1219.60px;top:89.20px;width:12.40px;height:495.20px;background:#f8f8f8;z-index:2;"></div>
<div style="position:absolute;left:51.60px;top:587.90px;width:17.00px;height:7.50px;background:#c2c2c2;border-radius:4px;z-index:3;"></div>
<div style="position:absolute;left:1223.00px;top:93.00px;width:7.20px;height:17.00px;background:#c2c2c2;border-radius:4px;z-index:3;"></div>
<div style="position:absolute;left:48.00px;top:597.40px;width:1184.00px;height:22.20px;background:#ededed;z-index:2;border-top:1px solid #e2e2e2;box-sizing:border-box;"></div>
<div style="position:absolute;left:100.40px;top:597.40px;width:129.00px;height:19.20px;background:#fff;z-index:3;box-shadow:0 1px 1px rgba(0,0,0,0.18);border-radius:0 0 2px 2px;"></div>
<div class="t" style="left:117.24px;top:607.60px;font-size:10.8px;font-weight:bold;color:#22733b;z-index:4;transform:scaleX(0.9349);transform-origin:0 0;">Proposals Template</div>
<svg width="1280" height="703" style="z-index:4"><polygon points="67.1,604.3 67.1,613.2 60.8,608.75" fill="#b3b3b3"/><polygon points="80.8,604.3 80.8,613.2 86.8,608.75" fill="#b3b3b3"/><path d="M246.5 604 V613 M242 608.5 H251" stroke="#a9a9a9" stroke-width="1.3"/><line x1="263.5" y1="599" x2="263.5" y2="618" stroke="#dcdcdc" stroke-width="1"/></svg>
<div style="position:absolute;left:48.00px;top:619.60px;width:1184.00px;height:20.40px;background:linear-gradient(#e4e4e4,#dedede);z-index:2;border-top:1px solid #c4c4c4;box-sizing:border-box;"></div>
<div style="position:absolute;left:48.00px;top:620.60px;width:1184.00px;height:0.80px;background:#efefef;z-index:2;"></div>
<div style="position:absolute;left:48.00px;top:638.60px;width:1184.00px;height:1.40px;background:#f2f2f2;z-index:2;"></div>
<div class="t" style="left:68.25px;top:629.40px;font-size:10.6px;color:#575757;z-index:3;">Ready</div>
<div class="t" style="left:906.14px;top:629.50px;font-size:10.6px;color:#575757;z-index:3;transform:scaleX(1.0494);transform-origin:0 0;">Count: 0</div>
<div style="position:absolute;left:957.20px;top:620.10px;width:31.50px;height:19.60px;background:#b5b5b5;z-index:3;"></div>
<svg width="1280" height="703" style="z-index:4"><rect x="966.8" y="623.6" width="12.2" height="11.4" rx="2" fill="#fff"/><circle cx="969.40" cy="626.00" r="0.9" fill="#555"/><circle cx="969.40" cy="629.30" r="0.9" fill="#555"/><circle cx="969.40" cy="632.60" r="0.9" fill="#555"/><circle cx="972.90" cy="626.00" r="0.9" fill="#555"/><circle cx="972.90" cy="629.30" r="0.9" fill="#555"/><circle cx="972.90" cy="632.60" r="0.9" fill="#555"/><circle cx="976.40" cy="626.00" r="0.9" fill="#555"/><circle cx="976.40" cy="629.30" r="0.9" fill="#555"/><circle cx="976.40" cy="632.60" r="0.9" fill="#555"/><rect x="998.3" y="624.1" width="11" height="10.4" rx="1" fill="none" stroke="#777" stroke-width="1"/><path d="M1001 626 V633 M1006.5 626 V633 M1002.5 627.5 H1005 M1002.5 629.5 H1005 M1002.5 631.5 H1005" stroke="#8a8a8a" stroke-width="0.8"/><rect x="1028.5" y="624.1" width="11" height="10.4" rx="1" fill="none" stroke="#777" stroke-width="1"/><path d="M1031.3 624.5 V630 H1039 M1034 624.5 V630" stroke="#777" stroke-width="1" fill="none"/><path d="M1056.8 629.6 H1063.4" stroke="#555" stroke-width="1.4"/><line x1="1071" y1="630" x2="1153.7" y2="630" stroke="#a9a9a9" stroke-width="3" stroke-linecap="round"/><circle cx="1112.3" cy="630" r="7" fill="#fff" stroke="#bdbdbd" stroke-width="0.5"/><path d="M1161.8 629.8 H1168.1 M1164.95 626.6 V633" stroke="#555" stroke-width="1.4"/></svg>
<div class="t" style="left:1182.04px;top:630.30px;font-size:10.3px;color:#575757;z-index:3;transform:scaleX(1.1135);transform-origin:0 0;">100%</div>
<svg width="1280" height="703" style="z-index:5"><circle cx="64.5" cy="46.5" r="5.9" fill="#ee6b60" stroke="#246a30" stroke-width="1"/><circle cx="64.5" cy="46.5" r="1.3" fill="#6b1a14"/><circle cx="81.5" cy="46.5" r="5.9" fill="#f5be4f" stroke="#246a30" stroke-width="1"/><circle cx="98.6" cy="46.5" r="5.9" fill="#61c454" stroke="#246a30" stroke-width="1"/><rect x="176.3" y="40.6" width="32.8" height="11.4" rx="5.7" fill="#2f5a39"/><circle cx="182" cy="46.3" r="5.6" fill="#fff"/><g fill="none" stroke-linejoin="round" stroke-linecap="round"><path d="M221 45.6 L226.7 39.9 L232.4 45.6 V51.2 Q232.4 52.4 231.2 52.4 H229.6 V48.8 Q229.6 46.4 226.7 46.4 Q223.8 46.4 223.8 48.8 V52.4 H222.2 Q221 52.4 221 51.2 Z" stroke="#fff" stroke-width="1.5"/><path d="M245.8 40.4 H253.4 L256 43 V50.6 Q256 52.2 254.4 52.2 H245.6 Q244 52.2 244 50.6 V42 Q244 40.4 245.8 40.4 Z" stroke="#fff" stroke-width="1.5"/><path d="M247.6 40.8 V42.6 Q247.6 43.6 248.6 43.6 H251.6 Q252.6 43.6 252.6 42.6 V40.8 M246.9 51.8 V48.4 Q246.9 47.3 248 47.3 H252 Q253.1 47.3 253.1 48.4 V51.8" stroke="#fff" stroke-width="1.3"/><path d="M273.2 52.2 H268.8 Q267.2 52.2 267.2 50.6 V42 Q267.2 40.4 269 40.4 H276.6 L279.2 43 V45.2" stroke="#fff" stroke-width="1.5"/><path d="M270.8 40.8 V42.6 Q270.8 43.6 271.8 43.6 H274.8 Q275.8 43.6 275.8 42.6 V40.8 M270.1 51.8 V48.4 Q270.1 47.3 271.2 47.3 H273.6" stroke="#fff" stroke-width="1.3"/><path d="M273.4 52.2 L279.8 45.8" stroke="#fff" stroke-width="2.6"/></g><path d="M291.8 44.2 Q295.6 40.3 299.8 40.9 Q303.5 41.8 303.2 45.4 Q302.9 47.8 293.2 53.2" fill="none" stroke="#fff" stroke-width="1.5" stroke-linecap="round"/><path d="M291.2 40.4 V44.8 H295.6" fill="none" stroke="#fff" stroke-width="1.5" stroke-linecap="round" stroke-linejoin="round"/><path d="M310.8 45.6 L313 47.8 L315.2 45.6" fill="none" stroke="#fff" stroke-width="1.2" stroke-linecap="round"/><path d="M336.4 42.2 A6.4 6.4 0 1 0 337.5 47.2" fill="none" stroke="#fff" stroke-width="1.5" stroke-linecap="round"/><path d="M337.2 38.6 V42.6 H333.2" fill="none" stroke="#fff" stroke-width="1.5" stroke-linecap="round" stroke-linejoin="round"/><circle cx="349.4" cy="46.3" r="1.35" fill="#fff"/><circle cx="354" cy="46.3" r="1.35" fill="#fff"/><circle cx="358.6" cy="46.3" r="1.35" fill="#fff"/><path d="M548 39.5 H555.5 L559 43 V52.8 H548 Z" fill="#f4f4f4"/><rect x="547.2" y="43.6" width="5.6" height="5.6" fill="#7aa884"/><path d="M729 45.3 L731.5 47.6 L734 45.3" fill="none" stroke="#8fb596" stroke-width="0.9"/><circle cx="1184" cy="45" r="4.9" fill="none" stroke="#fff" stroke-width="1.6"/><path d="M1187.6 48.6 L1191.6 52.5" stroke="#fff" stroke-width="1.7" stroke-linecap="round"/><circle cx="1211.9" cy="44.6" r="2.5" fill="none" stroke="#fff" stroke-width="1.5"/><path d="M1208.3 49.6 Q1212.3 48.3 1216.3 49.6 Q1216.6 53.6 1212.3 53.6 Q1208 53.6 1208.3 49.6 Z" fill="none" stroke="#fff" stroke-width="1.5" stroke-linejoin="round"/><path d="M1216.6 39.9 H1220.6 Q1222.2 39.9 1222.2 41.5 V42.6 Q1222.2 44.2 1220.6 44.2 H1218.6 L1216.4 45.8 L1216.6 44.2 Q1215.2 44 1215.2 42.6 V41.5 Q1215.2 39.9 1216.6 39.9 Z" fill="none" stroke="#fff" stroke-width="1.4" stroke-linejoin="round"/><path d="M584.6 76.2 Q584.4 74 583.2 72.8 A4.6 4.6 0 1 1 589.8 72.8 Q588.6 74 588.4 76.2 Z" fill="none" stroke="#5a5a5a" stroke-width="0.95" stroke-linejoin="round"/><path d="M585.2 77.9 H587.8" stroke="#6a6a6a" stroke-width="1.3" stroke-linecap="round"/><path d="M1083.2 73.6 V79.4 H1092.6 V77.2" fill="none" stroke="#4f7f5c" stroke-width="0.9" stroke-linejoin="round"/><path d="M1086.2 77.6 Q1086.4 73.4 1091.8 72.9 M1090.1 70.9 L1092.4 72.9 L1090.1 74.9" fill="none" stroke="#4f7f5c" stroke-width="0.9" stroke-linejoin="round" stroke-linecap="round"/><path d="M1149.2 69.2 H1158.8 V77 H1153.6 L1151.2 79.3 V77 H1149.2 Z" fill="none" stroke="#777" stroke-width="0.9" stroke-linejoin="round"/></svg>
<div class="t" style="left:126.77px;top:46.90px;font-size:10px;font-weight:bold;color:#f0f0f0;z-index:5;transform:scaleX(0.9363);transform-origin:0 0;">AutoSave</div>
<div class="t" style="left:189.22px;top:47.20px;font-size:7.2px;font-weight:bold;color:#d8e6da;z-index:6;transform:scaleX(0.9740);transform-origin:0 0;">OFF</div>
<div class="t" style="left:563.34px;top:46.90px;font-size:12px;font-weight:bold;color:#fafafa;z-index:5;transform:scaleX(0.9843);transform-origin:0 0;">2021.032B.N.v1.Gclasvirinae</div>
<div class="t" style="left:549.5px;top:47.07px;font-size:5px;font-weight:bold;color:#fff;z-index:6">X</div>
<div class="t" style="left:57.02px;top:72.30px;font-size:11.0px;color:#1a1a1a;z-index:5;transform:scaleX(1.1185);transform-origin:0 0;-webkit-text-stroke:0.15px #1a1a1a;">Home</div>
<div class="t" style="left:108.84px;top:72.30px;font-size:11.0px;color:#1a1a1a;z-index:5;transform:scaleX(1.1718);transform-origin:0 0;-webkit-text-stroke:0.15px #1a1a1a;">Insert</div>
<div class="t" style="left:162.57px;top:72.30px;font-size:11.0px;color:#1a1a1a;z-index:5;transform:scaleX(1.0583);transform-origin:0 0;-webkit-text-stroke:0.15px #1a1a1a;">Draw</div>
<div class="t" style="left:212.58px;top:72.30px;font-size:11.0px;color:#1a1a1a;z-index:5;transform:scaleX(1.0398);transform-origin:0 0;-webkit-text-stroke:0.15px #1a1a1a;">Page Layout</div>
<div class="t" style="left:300.05px;top:72.30px;font-size:11.0px;color:#1a1a1a;z-index:5;transform:scaleX(1.0817);transform-origin:0 0;-webkit-text-stroke:0.15px #1a1a1a;">Formulas</div>
<div class="t" style="left:371.59px;top:72.30px;font-size:11.0px;color:#1a1a1a;z-index:5;transform:scaleX(1.0300);transform-origin:0 0;-webkit-text-stroke:0.15px #1a1a1a;">Data</div>
<div class="t" style="left:417.84px;top:72.30px;font-size:11.0px;color:#1a1a1a;z-index:5;transform:scaleX(1.0298);transform-origin:0 0;-webkit-text-stroke:0.15px #1a1a1a;">Review</div>
<div class="t" style="left:477.44px;top:72.30px;font-size:11.0px;color:#1a1a1a;z-index:5;transform:scaleX(1.0278);transform-origin:0 0;-webkit-text-stroke:0.15px #1a1a1a;">View</div>
<div class="t" style="left:523.75px;top:72.30px;font-size:11.0px;color:#1a1a1a;z-index:5;transform:scaleX(1.0769);transform-origin:0 0;-webkit-text-stroke:0.15px #1a1a1a;">Acrobat</div>
<div class="t" style="left:599.27px;top:72.30px;font-size:11.0px;color:#1a1a1a;z-index:5;transform:scaleX(1.0264);transform-origin:0 0;-webkit-text-stroke:0.15px #1a1a1a;">Tell me</div>
<div style="position:absolute;left:1075.60px;top:64.00px;width:56.00px;height:19.60px;background:#fbfbfb;border:1px solid #dcdcdc;border-radius:4px;box-sizing:border-box;z-index:4;"></div>
<div style="position:absolute;left:1141.40px;top:64.00px;width:81.30px;height:19.60px;background:#fbfbfb;border:1px solid #dcdcdc;border-radius:4px;box-sizing:border-box;z-index:4;"></div>
<div class="t" style="left:1097.69px;top:74.25px;font-size:10.9px;font-weight:bold;color:#1f6e3a;z-index:5;transform:scaleX(0.9597);transform-origin:0 0;">Share</div>
<div class="t" style="left:1163.18px;top:74.25px;font-size:10.9px;font-weight:bold;color:#1f6e3a;z-index:5;transform:scaleX(0.9707);transform-origin:0 0;">Comments</div>
</div></div></body></html>
